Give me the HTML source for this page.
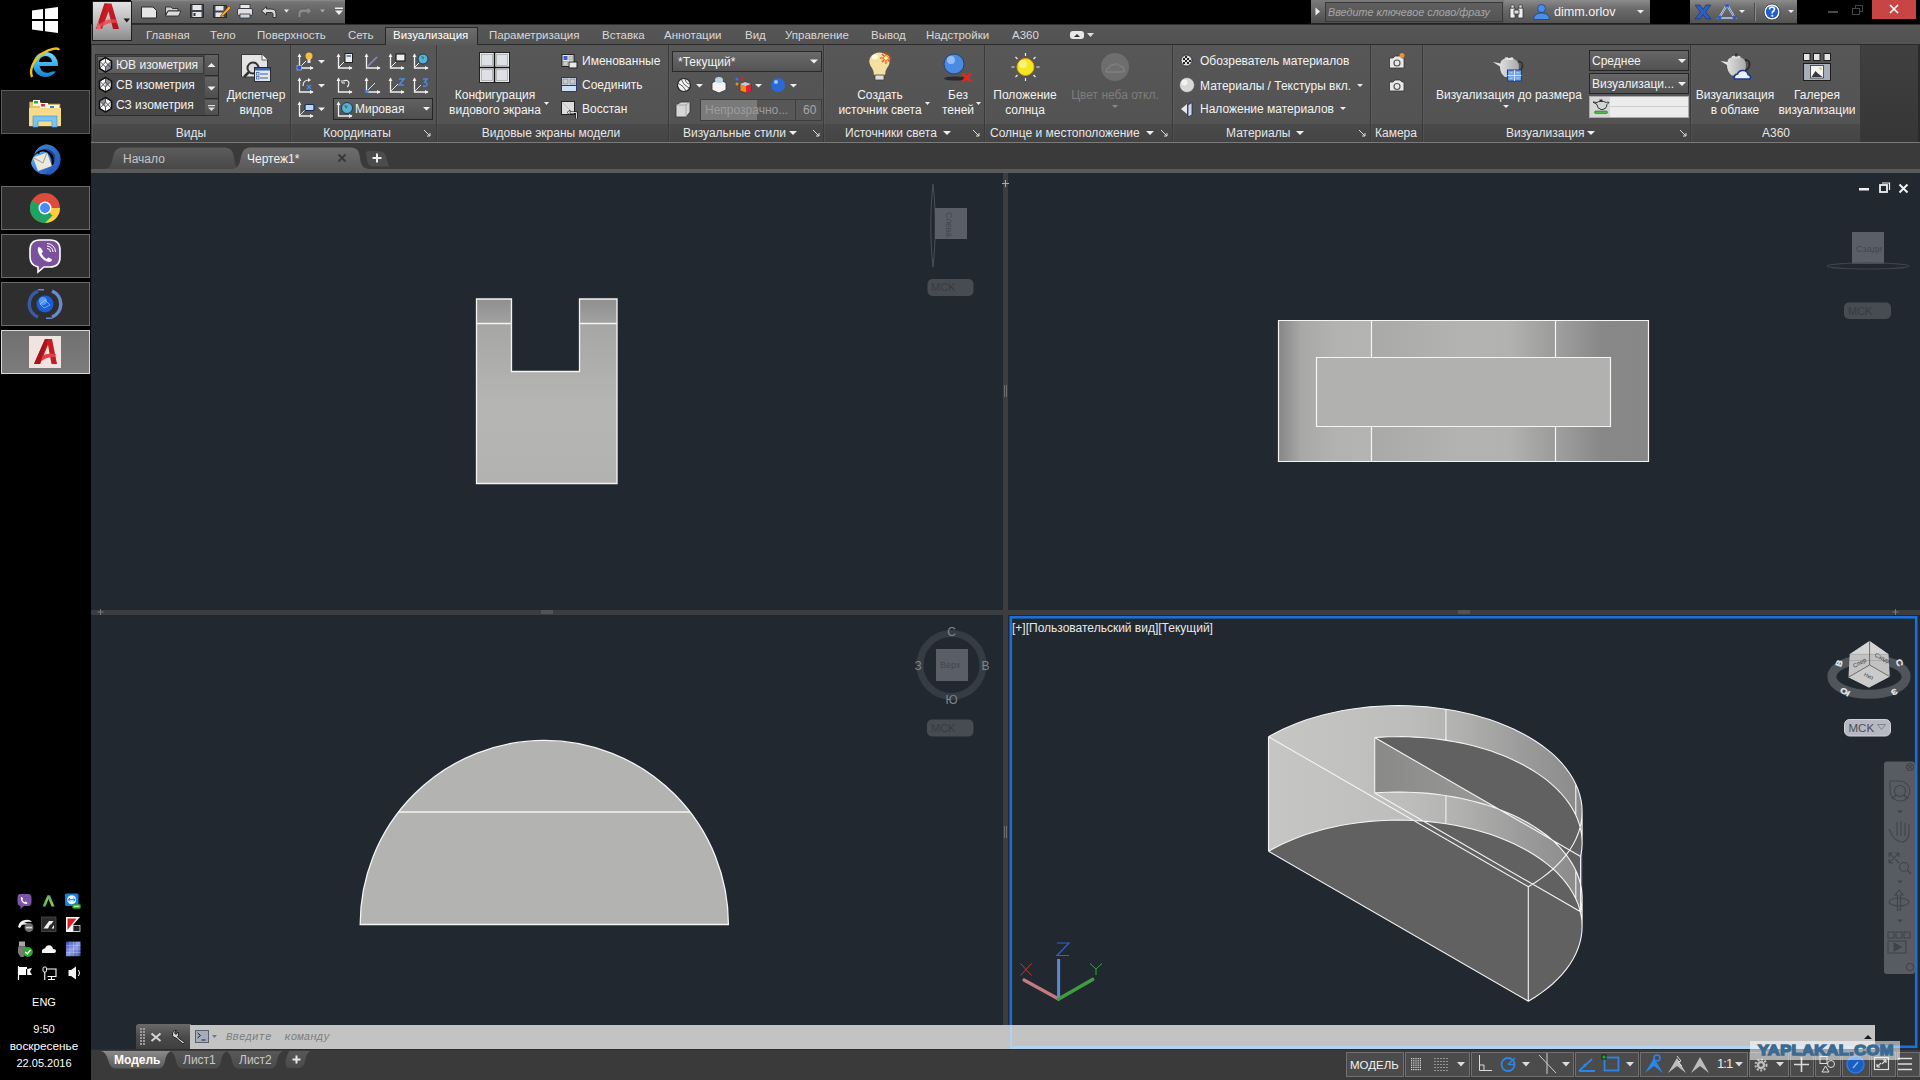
<!DOCTYPE html>
<html><head><meta charset="utf-8">
<style>
*{margin:0;padding:0;box-sizing:border-box}
html,body{width:1920px;height:1080px;overflow:hidden;background:#000;font-family:"Liberation Sans",sans-serif;color:#e8e8e8}
.a{position:absolute}
.t{position:absolute;white-space:nowrap;font-size:12px;line-height:14px}
svg{position:absolute;overflow:visible}
</style></head><body>

<!-- ============ LEFT TASKBAR ============ -->
<div class="a" style="left:0;top:0;width:91px;height:1080px;background:#000"></div>
<!-- windows logo -->
<svg style="left:0;top:0" width="91" height="40"><path d="M32,10.5 L43,9 V19 H32Z M45,8.7 L58,7 V19 H45Z M32,21 H43 V31 L32,29.5Z M45,21 H58 V33 L45,31.3Z" fill="#fff"/></svg>
<!-- IE -->
<svg style="left:0;top:40px" width="91" height="46">
<defs><linearGradient id="ieg" x1="0" y1="0" x2="0" y2="1"><stop offset="0" stop-color="#7ad8fa"/><stop offset="0.6" stop-color="#2eaaea"/><stop offset="1" stop-color="#1a80d0"/></linearGradient></defs>
<circle cx="45.5" cy="24.5" r="12.5" fill="url(#ieg)"/>
<path d="M39,22 A6.5,6 0 0 1 52,22Z" fill="#000"/>
<path d="M39.5,26 H59 V31.5 H52 Q46,34.5 41.5,30.5Z" fill="#000"/>
<path d="M32,37 C29,29 34,19 43,13 C50,9 58,7 59,10" fill="none" stroke="#eec020" stroke-width="2.4"/>
</svg>
<!-- explorer box -->
<div class="a" style="left:1px;top:90px;width:89px;height:44px;background:#2e2e2e;border:1px solid #5a5a5a"></div>
<svg style="left:0;top:90px" width="91" height="44">
<path d="M29.5,12 H40 L42,14 H60 V36 H29.5Z" fill="#e2c468" stroke="#b89a40" stroke-width="0.6"/>
<rect x="33" y="10" width="7" height="6" fill="#f4f4f4"/><rect x="34" y="11" width="4" height="2.5" fill="#3a3"/>
<rect x="40" y="13" width="8" height="5" fill="#f4f4f4"/><rect x="41" y="14" width="4" height="2.5" fill="#d33"/>
<rect x="48" y="15" width="11" height="4" fill="#f4f4f4"/><rect x="50" y="16" width="4" height="2.5" fill="#38d"/>
<path d="M29,18 H61 V36 H29Z" fill="#f6dc8a"/>
<path d="M33,26 H57 V37 H52 V31 H38 V37 H33Z" fill="#7cc4ee" stroke="#4a98d0" stroke-width="0.7"/>
</svg>
<!-- thunderbird -->
<svg style="left:0;top:140px" width="91" height="42">
<defs><linearGradient id="tbg" x1="0" y1="0" x2="1" y2="1"><stop offset="0" stop-color="#7ac8f4"/><stop offset="0.5" stop-color="#3a84dc"/><stop offset="1" stop-color="#1a3aa0"/></linearGradient></defs>
<path d="M45.7,4.6 A15,15 0 1 1 31,23 Q33,14 40,12 Q46,10 50,16 Q53,21 51,27 Q56,22 55,15 Q52,9 45,9 Q38,9 34,15 Q36,7 45.7,4.6Z" fill="url(#tbg)"/>
<path d="M45.7,4.6 A15,15 0 0 1 58,27 Q55,34 47,36 Q54,30 54,22 Q54,13 46,10 Q40,9 35,13 Q39,6 45.7,4.6Z" fill="#2a62c8" opacity="0.7"/>
<circle cx="38.5" cy="12.7" r="1.2" fill="#111"/>
<path d="M33,17.5 L47,12.5 L52,26 L38,31Z" fill="#ece8dc"/>
<path d="M33,17.5 L43,23 L47,12.5" fill="none" stroke="#8a8678" stroke-width="0.8"/>
</svg>
<!-- chrome box -->
<div class="a" style="left:1px;top:186px;width:89px;height:44px;background:#2e2e2e;border:1px solid #6a6a6a"></div>
<svg style="left:0;top:186px" width="91" height="44">
<circle cx="45" cy="22" r="15" fill="#dd4b3c"/>
<path d="M45,22 L58,29.5 A15,15 0 0 1 37.5,35Z" fill="#1da462"/>
<path d="M45,22 L37.5,35 A15,15 0 0 1 32,14.5 L45,22Z" fill="#1da462"/>
<path d="M45,22 L60,22 A15,15 0 0 1 45,37 L52.5,29.5Z" fill="#ffcd40"/>
<circle cx="45" cy="22" r="6.5" fill="#fff"/>
<circle cx="45" cy="22" r="5" fill="#4a8af4"/>
</svg>
<!-- viber box -->
<div class="a" style="left:1px;top:234px;width:89px;height:44px;background:#2e2e2e;border:1px solid #6a6a6a"></div>
<svg style="left:0;top:234px" width="91" height="44">
<path d="M40,6 H50 Q60,6 60,16 V23 Q60,33 50,33 H44 L38,38 V33 Q30,31 30,23 V16 Q30,6 40,6Z" fill="#7b519d" stroke="#fff" stroke-width="1.6"/>
<path d="M38.5,13 Q37,15 38.5,19 Q41,25 47,27.5 Q50,28.5 51.5,27 L52,25.5 L48.5,23.5 L46.5,25 Q43,23 41.5,19.5 L43,17.5 L41,14Z" fill="#fff"/>
<path d="M47,12 A6,6 0 0 1 53,18 M47,9.5 A8.5,8.5 0 0 1 55.5,18 M47,14.5 A3.5,3.5 0 0 1 50.5,18" fill="none" stroke="#fff" stroke-width="1"/>
</svg>
<!-- globe box -->
<div class="a" style="left:1px;top:282px;width:89px;height:44px;background:#2e2e2e;border:1px solid #6a6a6a"></div>
<svg style="left:0;top:282px" width="91" height="44">
<path d="M38,9 A14,14 0 0 0 38,35" fill="none" stroke="#3a5aa8" stroke-width="3.5"/>
<path d="M52,9 A14,14 0 0 1 52,35" fill="none" stroke="#6a8ad0" stroke-width="3.5"/>
<rect x="38" y="7" width="6" height="1.5" fill="#6a8ad0"/><rect x="46" y="35.5" width="6" height="1.5" fill="#6a8ad0"/>
<circle cx="45" cy="22" r="8.5" fill="#1a5ed8"/>
<circle cx="43" cy="19" r="4" fill="#6ab4f8" opacity="0.7"/>
<path d="M40,22 L45,18 L50,23 L44,26Z" fill="none" stroke="#cfe8ff" stroke-width="0.5"/>
</svg>
<!-- autocad box -->
<div class="a" style="left:1px;top:330px;width:89px;height:44px;background:linear-gradient(#707070,#7c7c7c);border:1px solid #d8d8d8"></div>
<div class="a" style="left:29px;top:336px;width:32px;height:32px;background:#f0e4e0"></div>
<svg style="left:0;top:330px" width="91" height="44">
<path d="M34,34 L45,9 H52 L57,34 H51.5 L48,15 L40,34Z" fill="#c41c24"/>
<path d="M36,30 Q44,22 56,24 L55,27 Q46,26 39,33Z" fill="#e04048"/>
<path d="M45,9 H48 L40,34 H34Z" fill="#a8141c"/>
</svg>
<!-- tray icons -->
<svg style="left:0;top:0" width="91" height="1000">
<defs><linearGradient id="adsk" x1="0" y1="1" x2="1" y2="0"><stop offset="0" stop-color="#2eb4a0"/><stop offset="0.5" stop-color="#8ac840"/><stop offset="1" stop-color="#2a8ad8"/></linearGradient>
<linearGradient id="gridg" x1="0" y1="0" x2="1" y2="1"><stop offset="0" stop-color="#3a4aa8"/><stop offset="0.5" stop-color="#8a9ae8"/><stop offset="1" stop-color="#3a4aa8"/></linearGradient></defs>
<path d="M20,894 H28 Q31.5,894 31.5,898 V902 Q31.5,906 28,906 H24 L20.5,909 V906 Q17.5,905.5 17.5,902 V898 Q17.5,894 20,894Z" fill="#7d55a8"/>
<path d="M21,897 Q20,899 22,902 Q24.5,904.5 27,904 L27.5,902.8 L25.5,901.5 L24.5,902.3 Q23,901.5 22.3,900 L23,899 L22,897Z" fill="#fff"/>
<path d="M42.5,906.5 L47.5,895.3 H50 L54.5,906.5 H51.5 L48.5,899 L45.5,906.5Z" fill="url(#adsk)"/>
<rect x="65" y="893.5" width="13.5" height="12.5" rx="1.5" fill="#1a7ee0"/>
<circle cx="71.7" cy="899.7" r="4.5" fill="#e8f4ff"/><path d="M68.5,899.7 H75 M70,898 L68.3,899.7 L70,901.4 M73.4,898 L75.1,899.7 L73.4,901.4" fill="none" stroke="#1a7ee0" stroke-width="1"/>
<rect x="72.5" y="904.2" width="8" height="4.3" rx="1.2" fill="#3ab83a" stroke="#1a8a1a" stroke-width="0.6"/><rect x="74" y="905.8" width="5" height="1.2" fill="#c8f8a8"/>
<path d="M18,927 Q19,921 25,920 Q30,919 32,922 Q27,921 24,923 Q21,925 20,928Z" fill="#f2f2f2"/><path d="M20,924.5 Q25,923 29,925" fill="none" stroke="#f2f2f2" stroke-width="1.5"/>
<circle cx="29" cy="927.5" r="4.5" fill="#6e6e6e"/><rect x="26" y="926.8" width="6" height="1.6" fill="#ddd"/>
<rect x="41.5" y="917" width="14.5" height="14.5" fill="#2a2a2a" stroke="#555" stroke-width="0.7"/>
<path d="M43.5,928.5 L49,921 H53.5 L51,924.5 H50 L48,928.5Z M51.5,928.5 L54,925 V928.5Z" fill="#f0f0f0"/>
<path d="M66,917 L80,917 L73,925 L80,932 L66,932Z" fill="#fff"/><path d="M67.5,918.5 H76.5 L72,924 L67.5,930Z" fill="#e01a20"/>
<rect x="73" y="925.5" width="7" height="6" fill="#222" stroke="#ddd" stroke-width="0.8"/>
<rect x="19" y="941.5" width="6" height="5" fill="#a8a8a8"/><path d="M18,946.5 H26 V953 L23.5,957 H20.5 L18,953Z" fill="#7a7a7a"/>
<circle cx="27.8" cy="952" r="5" fill="#2ea82e"/><path d="M25.3,952 L27.3,954 L30.5,949.8" fill="none" stroke="#fff" stroke-width="1.3"/>
<path d="M42,952.5 Q41.5,948.5 45,948.5 Q46.5,944.5 50.5,945.5 Q53,946.5 53,949 Q56,949 56,951 Q56,953 54,953 H43.5 Q42,953 42,952.5Z" fill="#f6f6f6"/>
<rect x="66" y="941.6" width="14.5" height="14.6" fill="url(#gridg)"/>
<path d="M66,945.5 H80.5 M66,949 H80.5 M66,952.5 H80.5 M70,941.6 V956.2 M73.5,941.6 V956.2 M77,941.6 V956.2" stroke="#c8d0f8" stroke-width="0.5" opacity="0.8"/>
<path d="M18.5,966 V980" stroke="#fff" stroke-width="1.2"/><path d="M19,967 H27 V969 L32,968 L30,971.5 L32,975 H19Z" fill="#fff"/><rect x="26" y="969" width="1.2" height="6" fill="#000"/>
<rect x="43" y="967" width="3.5" height="5" rx="1.2" fill="none" stroke="#fff" stroke-width="1"/><path d="M44.75,972 V980 M46.5,969 H56 V976.5 H47.5 M51.5,976.5 V979 M48,979.5 H55" fill="none" stroke="#fff" stroke-width="1.1"/>
<path d="M68.5,970 H71 L76,966.5 V979.5 L71,976 H68.5Z" fill="#f2f2f2"/><path d="M78.5,970 Q80.5,973 78.5,976" fill="none" stroke="#fff" stroke-width="1"/>
</svg>
<div class="t" style="left:0;top:995px;width:88px;text-align:center;color:#fff;font-size:11px">ENG</div>
<div class="t" style="left:0;top:1022px;width:88px;text-align:center;color:#fff;font-size:11px">9:50</div>
<div class="t" style="left:0;top:1039px;width:88px;text-align:center;color:#fff;font-size:11.8px">воскресенье</div>
<div class="t" style="left:0;top:1056px;width:88px;text-align:center;color:#fff;font-size:11px">22.05.2016</div>

<!-- ============ TITLE BAR ============ -->
<div class="a" style="left:91px;top:0;width:1829px;height:24px;background:#000"></div>
<!-- QAT -->
<div class="a" style="left:131px;top:0;width:214px;height:24px;background:linear-gradient(#8c8c8c 0,#747474 2px,#666 45%,#585858 100%);border-bottom:1px solid #2a2a2a"></div>
<svg style="left:0;top:0" width="360" height="24">
<path d="M141.5,7 H153 L156.5,10.5 V18 H141.5Z" fill="#e6e6e6" stroke="#2a2a2a" stroke-width="1"/>
<path d="M165.5,7 H171 L172.5,8.5 H178 V11 H168 L165.5,15Z" fill="#cfcfcf" stroke="#2a2a2a" stroke-width="0.9"/>
<path d="M165.5,16 L168,11 H181 L178.5,16Z" fill="#dcdcdc" stroke="#2a2a2a" stroke-width="0.9"/>
<rect x="190.5" y="4.5" width="13" height="13" fill="#3f4550" stroke="#2a2a2a"/>
<rect x="192.5" y="5" width="9" height="5" fill="#e6e6e6"/><rect x="192.5" y="12" width="9" height="5" fill="#e6e6e6"/><rect x="193.5" y="13" width="2" height="3" fill="#333"/>
<rect x="213.5" y="5.5" width="13" height="12" fill="#3f4550" stroke="#2a2a2a"/>
<rect x="215.5" y="6" width="8" height="4.5" fill="#e6e6e6"/><rect x="215.5" y="12.5" width="8" height="4.5" fill="#e6e6e6"/>
<path d="M221,15 L229,6 L231,8 L223,16 L220.5,16.5Z" fill="#f0b030" stroke="#7a3a10" stroke-width="0.7"/>
<rect x="240" y="4.5" width="10" height="4" fill="#e8e8e8" stroke="#333" stroke-width="0.8"/>
<rect x="237.5" y="8.5" width="15" height="7" rx="1.5" fill="#e0e0e0" stroke="#333" stroke-width="0.9"/>
<rect x="240" y="14" width="10" height="4" fill="#c9d6e6" stroke="#333" stroke-width="0.8"/>
<path d="M261.5,11 L266.5,6.5 V9 H271 Q276,9 276,14 V17.5 H273 V14 Q273,12.5 271,12.5 H266.5 V15Z" fill="#d8d8d8" stroke="#2a2a2a" stroke-width="0.9"/>
<path d="M284,9.5 H289 L286.5,12.5Z" fill="#eee"/>
<path d="M312,11 L307,6.5 V9 H302.5 Q298,9 298,14 V17.5 H301 V14 Q301,12.5 303,12.5 H307 V15Z" fill="#8a8a8a" stroke="#5a5a5a" stroke-width="0.8"/>
<path d="M320,9.5 H325 L322.5,12.5Z" fill="#aaa"/>
<rect x="335" y="7.5" width="8" height="1.5" fill="#eee"/><path d="M335,10.5 H343 L339,15Z" fill="#eee"/>
</svg>
<!-- search -->
<div class="a" style="left:1311px;top:0;width:193px;height:24px;background:linear-gradient(#7a7a7a,#4e4e4e);border-bottom:1px solid #222"></div>
<svg style="left:1311px;top:0" width="14" height="24"><path d="M4.5,7.5 L9,11.5 L4.5,15.5Z" fill="#eee"/></svg>
<div class="a" style="left:1325px;top:2px;width:178px;height:20px;background:linear-gradient(#5f5f5f,#545454);border:1px solid #3a3a3a"></div>
<div class="t" style="left:1328px;top:5px;font-size:10.8px;font-style:italic;color:#a6a6a6">Введите ключевое слово/фразу</div>
<!-- user toolbar -->
<div class="a" style="left:1504px;top:0;width:146px;height:24px;background:linear-gradient(#8a8a8a,#6a6a6a 40%,#545454);border-bottom:1px solid #222"></div>
<svg style="left:1504px;top:0" width="146" height="24">
<path d="M6,8 H11 V18 H6Z M14,8 H19 V18 H14Z" fill="#f0f0f0" stroke="#333" stroke-width="0.8"/>
<rect x="10" y="10" width="5" height="4" fill="#ddd" stroke="#333" stroke-width="0.8"/>
<rect x="7" y="5" width="3" height="3" fill="#ddd" stroke="#333" stroke-width="0.6"/><rect x="15" y="5" width="3" height="3" fill="#ddd" stroke="#333" stroke-width="0.6"/>
<circle cx="37.5" cy="8.5" r="4" fill="#4a8ee8" stroke="#1a3e90" stroke-width="0.8"/>
<path d="M29.5,19.5 Q30,13 37.5,13 Q45,13 45.5,19.5Z" fill="#4a8ee8" stroke="#1a3e90" stroke-width="0.8"/>
<path d="M133,10 H140 L136.5,13.5Z" fill="#eee"/>
</svg>
<div class="t" style="left:1554px;top:5px;font-size:12.6px;color:#f2f2f2">dimm.orlov</div>
<div class="a" style="left:1690px;top:0;width:107px;height:24px;background:linear-gradient(#8a8a8a,#6a6a6a 40%,#545454);border-bottom:1px solid #222"></div>
<svg style="left:1690px;top:0" width="107" height="24">
<path d="M5,5 H10 L13,9.5 L16,5 H21 L15.5,12 L21,19 H16 L13,14.5 L10,19 H5 L10.5,12Z" fill="#2a5fc8" stroke="#10306a" stroke-width="0.6"/>
<path d="M37,5 L45,18 H29Z" fill="none" stroke="#e6e6e6" stroke-width="2"/>
<path d="M37,5 L45,18 H29Z" fill="none" stroke="#2a5fc8" stroke-width="0.8"/>
<circle cx="37" cy="5.5" r="2" fill="#2a5fc8"/><circle cx="29.5" cy="17.5" r="2" fill="#2a5fc8"/><circle cx="44.5" cy="17.5" r="2" fill="#2a5fc8"/>
<path d="M49,10 H55 L52,13Z" fill="#eee"/>
<rect x="64" y="3" width="1" height="18" fill="#4a4a4a"/><rect x="65" y="3" width="1" height="18" fill="#8a8a8a"/>
<circle cx="82" cy="12" r="8" fill="#fff" stroke="#333" stroke-width="0.8"/><circle cx="82" cy="12" r="6.2" fill="#1f5fd0"/>
<path d="M79.5,9.5 Q79.5,7 82,7 Q84.5,7 84.5,9.3 Q84.5,11 82.3,12 V13.5" fill="none" stroke="#fff" stroke-width="1.6"/><circle cx="82.3" cy="15.7" r="1" fill="#fff"/>
<path d="M98,10 H104 L101,13Z" fill="#eee"/>
</svg>
<!-- window controls -->
<div class="a" style="left:1828px;top:11px;width:10px;height:2px;background:#4a4a4a"></div>
<div class="a" style="left:1855px;top:5px;width:8px;height:7px;border:1px solid #444"></div>
<div class="a" style="left:1852px;top:8px;width:8px;height:7px;border:1px solid #444;background:#000"></div>
<div class="a" style="left:1872px;top:0;width:44px;height:19px;background:#c74545"></div>
<svg style="left:1872px;top:0" width="44" height="19"><path d="M18,5 L26,13 M26,5 L18,13" stroke="#fff" stroke-width="1.6"/></svg>


<!-- ============ RIBBON TABS ============ -->
<div class="a" style="left:91px;top:24px;width:1829px;height:21px;background:linear-gradient(#565656,#525252);border-top:1px solid #2e2e2e;border-bottom:1px solid #2c2c2c"></div>
<div class="a" style="left:385px;top:27px;width:93px;height:18px;background:linear-gradient(#6c6c6c,#5a5a5a);border:1px solid #262626;border-bottom:none"></div>
<div class="t" style="left:146px;top:28px;font-size:11.5px;color:#d8d8d8">Главная</div>
<div class="t" style="left:210px;top:28px;font-size:11.5px;color:#d8d8d8">Тело</div>
<div class="t" style="left:257px;top:28px;font-size:11.5px;color:#d8d8d8">Поверхность</div>
<div class="t" style="left:348px;top:28px;font-size:11.5px;color:#d8d8d8">Сеть</div>
<div class="t" style="left:393px;top:28px;font-size:11.5px;color:#ffffff">Визуализация</div>
<div class="t" style="left:489px;top:28px;font-size:11.5px;color:#d8d8d8">Параметризация</div>
<div class="t" style="left:602px;top:28px;font-size:11.5px;color:#d8d8d8">Вставка</div>
<div class="t" style="left:664px;top:28px;font-size:11.5px;color:#d8d8d8">Аннотации</div>
<div class="t" style="left:745px;top:28px;font-size:11.5px;color:#d8d8d8">Вид</div>
<div class="t" style="left:785px;top:28px;font-size:11.5px;color:#d8d8d8">Управление</div>
<div class="t" style="left:871px;top:28px;font-size:11.5px;color:#d8d8d8">Вывод</div>
<div class="t" style="left:926px;top:28px;font-size:11.5px;color:#d8d8d8">Надстройки</div>
<div class="t" style="left:1012px;top:28px;font-size:11.5px;color:#d8d8d8">A360</div>
<div class="a" style="left:1070px;top:31px;width:14px;height:8px;background:#e8e8e8;border-radius:3px"></div>
<svg style="left:0;top:0" width="1100" height="45"><path d="M1074,37 L1077,34 L1080,37Z" fill="#333"/><path d="M1087,33 H1094 L1090.5,37Z" fill="#ddd"/></svg>


<!-- ============ RIBBON PANELS ============ -->
<div class="a" style="left:91px;top:45px;width:1829px;height:98px;background:#393939"></div>
<div class="a" style="left:92px;top:45px;width:198px;height:79px;background:linear-gradient(#575757,#535353);border-left:1px solid #5c5c5c"></div>
<div class="a" style="left:92px;top:124px;width:198px;height:18px;background:linear-gradient(#4a4a4a,#444);border-left:1px solid #505050"></div>
<div class="a" style="left:290px;top:45px;width:1px;height:97px;background:#3a3a3a"></div>
<div class="a" style="left:291px;top:45px;width:145px;height:79px;background:linear-gradient(#575757,#535353);border-left:1px solid #5c5c5c"></div>
<div class="a" style="left:291px;top:124px;width:145px;height:18px;background:linear-gradient(#4a4a4a,#444);border-left:1px solid #505050"></div>
<div class="a" style="left:436px;top:45px;width:1px;height:97px;background:#3a3a3a"></div>
<div class="a" style="left:437px;top:45px;width:231px;height:79px;background:linear-gradient(#575757,#535353);border-left:1px solid #5c5c5c"></div>
<div class="a" style="left:437px;top:124px;width:231px;height:18px;background:linear-gradient(#4a4a4a,#444);border-left:1px solid #505050"></div>
<div class="a" style="left:668px;top:45px;width:1px;height:97px;background:#3a3a3a"></div>
<div class="a" style="left:669px;top:45px;width:154px;height:79px;background:linear-gradient(#575757,#535353);border-left:1px solid #5c5c5c"></div>
<div class="a" style="left:669px;top:124px;width:154px;height:18px;background:linear-gradient(#4a4a4a,#444);border-left:1px solid #505050"></div>
<div class="a" style="left:823px;top:45px;width:1px;height:97px;background:#3a3a3a"></div>
<div class="a" style="left:824px;top:45px;width:160px;height:79px;background:linear-gradient(#575757,#535353);border-left:1px solid #5c5c5c"></div>
<div class="a" style="left:824px;top:124px;width:160px;height:18px;background:linear-gradient(#4a4a4a,#444);border-left:1px solid #505050"></div>
<div class="a" style="left:984px;top:45px;width:1px;height:97px;background:#3a3a3a"></div>
<div class="a" style="left:985px;top:45px;width:187px;height:79px;background:linear-gradient(#575757,#535353);border-left:1px solid #5c5c5c"></div>
<div class="a" style="left:985px;top:124px;width:187px;height:18px;background:linear-gradient(#4a4a4a,#444);border-left:1px solid #505050"></div>
<div class="a" style="left:1172px;top:45px;width:1px;height:97px;background:#3a3a3a"></div>
<div class="a" style="left:1173px;top:45px;width:197px;height:79px;background:linear-gradient(#575757,#535353);border-left:1px solid #5c5c5c"></div>
<div class="a" style="left:1173px;top:124px;width:197px;height:18px;background:linear-gradient(#4a4a4a,#444);border-left:1px solid #505050"></div>
<div class="a" style="left:1370px;top:45px;width:1px;height:97px;background:#3a3a3a"></div>
<div class="a" style="left:1371px;top:45px;width:51px;height:79px;background:linear-gradient(#575757,#535353);border-left:1px solid #5c5c5c"></div>
<div class="a" style="left:1371px;top:124px;width:51px;height:18px;background:linear-gradient(#4a4a4a,#444);border-left:1px solid #505050"></div>
<div class="a" style="left:1422px;top:45px;width:1px;height:97px;background:#3a3a3a"></div>
<div class="a" style="left:1423px;top:45px;width:267px;height:79px;background:linear-gradient(#575757,#535353);border-left:1px solid #5c5c5c"></div>
<div class="a" style="left:1423px;top:124px;width:267px;height:18px;background:linear-gradient(#4a4a4a,#444);border-left:1px solid #505050"></div>
<div class="a" style="left:1690px;top:45px;width:1px;height:97px;background:#3a3a3a"></div>
<div class="a" style="left:1691px;top:45px;width:169px;height:79px;background:linear-gradient(#575757,#535353);border-left:1px solid #5c5c5c"></div>
<div class="a" style="left:1691px;top:124px;width:169px;height:18px;background:linear-gradient(#4a4a4a,#444);border-left:1px solid #505050"></div>
<div class="a" style="left:1860px;top:45px;width:1px;height:97px;background:#3a3a3a"></div>
<div class="a" style="left:91px;top:45px;width:1px;height:97px;background:#3a3a3a"></div>
<div class="a" style="left:1861px;top:45px;width:57px;height:97px;background:linear-gradient(#404040,#363636)"></div>
<div class="a" style="left:1918px;top:45px;width:2px;height:98px;background:#2a2a2a"></div>
<div class="a" style="left:91px;top:142px;width:1829px;height:1px;background:#7a7a7a"></div>
<div class="t" style="left:91px;top:126px;width:200px;text-align:center;color:#e6e6e6">Виды</div>
<div class="t" style="left:257px;top:126px;width:200px;text-align:center;color:#e6e6e6">Координаты</div>
<div class="t" style="left:451px;top:126px;width:200px;text-align:center;color:#e6e6e6">Видовые экраны модели</div>
<div class="t" style="left:1296px;top:126px;width:200px;text-align:center;color:#e6e6e6">Камера</div>
<div class="t" style="left:1676px;top:126px;width:200px;text-align:center;color:#e6e6e6">A360</div>
<div class="t" style="left:683px;top:126px;color:#e6e6e6">Визуальные стили</div>
<div class="t" style="left:845px;top:126px;color:#e6e6e6">Источники света</div>
<div class="t" style="left:990px;top:126px;color:#e6e6e6">Солнце и местоположение</div>
<div class="t" style="left:1226px;top:126px;color:#e6e6e6">Материалы</div>
<div class="t" style="left:1506px;top:126px;color:#e6e6e6">Визуализация</div>

<!-- ===== Виды ===== -->
<div class="a" style="left:95px;top:54px;width:124px;height:62px;background:#474747;border:1px solid #2c2c2c"></div>
<div class="a" style="left:97px;top:56px;width:107px;height:18px;background:linear-gradient(#707070,#5c5c5c);border:1px solid #3a3a3a"></div>
<div class="a" style="left:205px;top:55px;width:13px;height:21px;background:linear-gradient(#626262,#4e4e4e);border-bottom:1px solid #2c2c2c"></div>
<div class="a" style="left:205px;top:77px;width:13px;height:22px;background:linear-gradient(#626262,#4e4e4e);border-bottom:1px solid #2c2c2c"></div>
<div class="a" style="left:205px;top:100px;width:13px;height:15px;background:linear-gradient(#626262,#4e4e4e)"></div>
<svg style="left:0;top:0" width="300" height="140">
<path d="M207.5,67 L211.5,63 L215.5,67Z" fill="#eee"/>
<path d="M207.5,86.5 L211.5,90.5 L215.5,86.5Z" fill="#eee"/>
<rect x="208" y="105" width="7" height="1.2" fill="#ddd"/><path d="M208,107.5 H215 L211.5,111Z" fill="#ddd"/>
<polygon points="105.5,57.5 111.5,61.0 111.5,68.5 105.5,72.0 99.5,68.5 99.5,61.0" fill="#f4f4f4" stroke="#111" stroke-width="1.3"/><polygon points="105.5,67.0 111.5,61.0 111.5,68.5 105.5,72.0" fill="#8a9099"/><path d="M105.5,57.5 L105.5,62.0 L99.5,68.5 M105.5,62.0 L111.5,68.5 M105.5,72.0 L105.5,67.0 L99.5,61.0 M105.5,67.0 L111.5,61.0" fill="none" stroke="#333" stroke-width="0.8"/><polygon points="105.5,57.5 111.5,61.0 111.5,68.5 105.5,72.0 99.5,68.5 99.5,61.0" fill="none" stroke="#111" stroke-width="1.3"/>
<polygon points="105.5,77.5 111.5,81.0 111.5,88.5 105.5,92.0 99.5,88.5 99.5,81.0" fill="#f4f4f4" stroke="#111" stroke-width="1.3"/><polygon points="105.5,77.5 111.5,81.0 105.5,87.0 105.5,82.0" fill="#8a9099"/><path d="M105.5,77.5 L105.5,82.0 L99.5,88.5 M105.5,82.0 L111.5,88.5 M105.5,92.0 L105.5,87.0 L99.5,81.0 M105.5,87.0 L111.5,81.0" fill="none" stroke="#333" stroke-width="0.8"/><polygon points="105.5,77.5 111.5,81.0 111.5,88.5 105.5,92.0 99.5,88.5 99.5,81.0" fill="none" stroke="#111" stroke-width="1.3"/>
<polygon points="105.5,97.5 111.5,101.0 111.5,108.5 105.5,112.0 99.5,108.5 99.5,101.0" fill="#f4f4f4" stroke="#111" stroke-width="1.3"/><polygon points="105.5,97.5 105.5,102.0 105.5,107.0 99.5,101.0" fill="#8a9099"/><path d="M105.5,97.5 L105.5,102.0 L99.5,108.5 M105.5,102.0 L111.5,108.5 M105.5,112.0 L105.5,107.0 L99.5,101.0 M105.5,107.0 L111.5,101.0" fill="none" stroke="#333" stroke-width="0.8"/><polygon points="105.5,97.5 111.5,101.0 111.5,108.5 105.5,112.0 99.5,108.5 99.5,101.0" fill="none" stroke="#111" stroke-width="1.3"/>
<!-- dispatcher icon -->
<path d="M241.5,54.5 H262 L267.5,60 V77 H241.5Z" fill="#e4e4e4" stroke="#3a3a3a" stroke-width="1"/>
<path d="M262,54.5 V60 H267.5" fill="#fff" stroke="#3a3a3a" stroke-width="0.8"/>
<circle cx="253" cy="68" r="5.5" fill="#ddd" stroke="#333" stroke-width="2"/>
<path d="M249,72 L244,77" stroke="#333" stroke-width="2.5"/>
<rect x="254.5" y="67.5" width="16" height="14" fill="#dfe6ee" stroke="#2a2a2a" stroke-width="1"/>
<rect x="255" y="68" width="15" height="2.5" fill="#3a62a8"/>
<rect x="256.5" y="72.5" width="2.5" height="2.5" fill="none" stroke="#3a62a8" stroke-width="0.7"/><rect x="260" y="73.5" width="8" height="1" fill="#3a62a8"/>
<rect x="256.5" y="76.5" width="2.5" height="2.5" fill="none" stroke="#3a62a8" stroke-width="0.7"/><rect x="260" y="77.5" width="8" height="1" fill="#3a62a8"/>
</svg>
<div class="t" style="left:116px;top:58px;color:#f2f2f2">ЮВ изометрия</div>
<div class="t" style="left:116px;top:78px;color:#f2f2f2">СВ изометрия</div>
<div class="t" style="left:116px;top:98px;color:#f2f2f2">СЗ изометрия</div>
<div class="t" style="left:206px;top:88px;width:100px;text-align:center;color:#f2f2f2">Диспетчер</div>
<div class="t" style="left:206px;top:103px;width:100px;text-align:center;color:#f2f2f2">видов</div>

<!-- ===== Координаты ===== -->
<svg style="left:0;top:0" width="440" height="140">
<defs>
<g id="ucs"><path d="M1.5,1.5 V15 H15" fill="none" stroke="#f0f0f0" stroke-width="1.3"/><path d="M-0.5,4 L1.5,0.5 L3.5,4Z M12,13 L15.5,15 L12,17Z" fill="#f0f0f0"/></g>
<g id="dd"><path d="M0,0 H7 L3.5,3.5Z" fill="#eee"/></g>
</defs>
<use href="#ucs" x="298" y="53"/><path d="M300,67 L306,61" stroke="#f0f0f0" stroke-width="1"/><circle cx="309" cy="56" r="3.5" fill="#f5c040"/><rect x="307.5" y="59" width="3" height="4" fill="#ddd"/><rect x="297" y="65.5" width="4.5" height="4.5" fill="#2a55b8" stroke="#8ab0f0" stroke-width="0.8"/><use href="#dd" x="318" y="60"/>
<use href="#ucs" x="337" y="53"/><path d="M339,67 L344,62" stroke="#f0f0f0"/><rect x="345" y="53.5" width="7.5" height="9" fill="#eee" stroke="#222" stroke-width="1"/><rect x="346.5" y="55" width="4.5" height="2" fill="#7a8ab8"/>
<use href="#ucs" x="365" y="53"/><path d="M367,67 L377,57" stroke="#8a8ad8" stroke-width="1.5"/>
<use href="#ucs" x="389" y="53"/><path d="M391,67 L396,62" stroke="#f0f0f0"/><rect x="396" y="54" width="9" height="7" fill="#eee" stroke="#222" stroke-width="1.2"/>
<use href="#ucs" x="413" y="53"/><path d="M415,67 L419,63" stroke="#f0f0f0"/><circle cx="423" cy="59" r="5" fill="#5ab0d8" stroke="#1a3a5a" stroke-width="1"/><path d="M421,56 L424,57 L423,60Z" fill="#2a8a4a"/>
<use href="#ucs" x="298" y="77"/><path d="M303,86 Q303,80 309,80" fill="none" stroke="#f0f0f0" stroke-width="1.2"/><path d="M308,78 L311,80 L308,82Z" fill="#f0f0f0"/><path d="M307,85 L311,89 M311,85 L307,89" stroke="#4a8ae8" stroke-width="1.3"/><use href="#dd" x="318" y="84"/>
<use href="#ucs" x="337" y="77"/><path d="M343,81 Q348,79 349,83 Q349,86 347,87" fill="none" stroke="#f0f0f0" stroke-width="1.1"/><path d="M342,80 V83 H345" fill="none" stroke="#f0f0f0"/>
<use href="#ucs" x="365" y="77"/><path d="M367,91 L375,83" stroke="#f0f0f0" stroke-width="0.9"/><rect x="365.5" y="90" width="3" height="3" fill="#4a8ae8"/>
<use href="#ucs" x="389" y="77"/><path d="M391,91 L398,84" stroke="#f0f0f0" stroke-width="0.9"/><path d="M399,79 H404 L399,85 H404" fill="none" stroke="#4a8ae8" stroke-width="1.5"/>
<use href="#ucs" x="413" y="77"/><path d="M415,91 L421,85" stroke="#f0f0f0" stroke-width="0.9"/><path d="M423,79 H427 L424.5,82 Q427.5,82.5 427,85 Q426,87 423,86" fill="none" stroke="#4a8ae8" stroke-width="1.4"/>
<use href="#ucs" x="298" y="101"/><path d="M300,115 L305,110" stroke="#f0f0f0" stroke-width="0.9"/><rect x="305" y="104.5" width="9" height="6" rx="1" fill="#bcd6f0" stroke="#1a2a5a" stroke-width="1.2"/><use href="#dd" x="318" y="107.5"/>
</svg>
<div class="a" style="left:333px;top:98px;width:100px;height:22px;background:linear-gradient(#626262,#4e4e4e);border:1px solid #262626"></div>
<svg style="left:0;top:0" width="440" height="140">
<use href="#ucs" x="337" y="101"/><circle cx="347" cy="108" r="5.5" fill="#5ab0d8" stroke="#1a3a5a" stroke-width="1"/><path d="M344,105 L348,106 L346,109Z" fill="#2a8a4a"/>
<path d="M423,107 H430 L426.5,110.5Z" fill="#f0f0f0"/>
</svg>
<div class="t" style="left:355px;top:102px;color:#f2f2f2">Мировая</div>

<!-- ===== Видовые экраны ===== -->
<svg style="left:0;top:0" width="680" height="140">
<rect x="479.5" y="52.5" width="30" height="30" fill="#e8e8e8" stroke="#222" stroke-width="1"/>
<path d="M494.5,52.5 V82.5 M479.5,67.5 H509.5" stroke="#111" stroke-width="1.5"/>
<rect x="481.5" y="54.5" width="11" height="11" fill="#dde0e6" stroke="#aaa" stroke-width="0.8"/><rect x="496.5" y="54.5" width="11" height="11" fill="#dde0e6" stroke="#aaa" stroke-width="0.8"/>
<rect x="481.5" y="69.5" width="11" height="11" fill="#dde0e6" stroke="#aaa" stroke-width="0.8"/><rect x="496.5" y="69.5" width="11" height="11" fill="#dde0e6" stroke="#aaa" stroke-width="0.8"/>
<path d="M544,102 H549 L546.5,105Z" fill="#eee"/>
<rect x="562" y="54.5" width="12" height="12" fill="#e8e8e8" stroke="#222"/><rect x="563.5" y="56" width="4" height="4" fill="#3a62c8"/><rect x="569" y="56" width="4" height="4" fill="#ccc" stroke="#888" stroke-width="0.5"/><rect x="563.5" y="61.5" width="4" height="4" fill="#ccc" stroke="#888" stroke-width="0.5"/>
<rect x="569" y="62" width="8" height="6" fill="#e8e8e8" stroke="#222"/>
<rect x="561.5" y="77.5" width="15" height="14" fill="#cfe0f4" stroke="#2a3a6a"/><rect x="563" y="79" width="5" height="5" fill="#ccc" stroke="#777" stroke-width="0.6"/><rect x="570" y="79" width="5" height="5" fill="#ccc" stroke="#777" stroke-width="0.6"/><path d="M561.5,85.5 H576.5" stroke="#2a3a6a"/>
<rect x="561.5" y="101.5" width="13" height="13" fill="#dcdcdc" stroke="#222"/><path d="M563,103 L573,113" stroke="#bbb" stroke-width="1"/><path d="M576.5,118.5 V112.5 H569" fill="none" stroke="#111" stroke-width="2.2"/><path d="M576.5,118.5 V112.5 H569" fill="none" stroke="#eee" stroke-width="0.9"/><path d="M570,110 L567,112.5 L570,115Z" fill="#eee" stroke="#111" stroke-width="0.6"/>
</svg>
<div class="t" style="left:445px;top:88px;width:100px;text-align:center;color:#f2f2f2">Конфигурация</div>
<div class="t" style="left:445px;top:103px;width:100px;text-align:center;color:#f2f2f2">видового экрана</div>
<div class="t" style="left:582px;top:54px;color:#f2f2f2">Именованные</div>
<div class="t" style="left:582px;top:78px;color:#f2f2f2">Соединить</div>
<div class="t" style="left:582px;top:102px;color:#f2f2f2">Восстан</div>

<!-- ===== Визуальные стили ===== -->
<div class="a" style="left:672px;top:51px;width:150px;height:21px;background:linear-gradient(#6a6a6a,#545454);border:1px solid #2a2a2a"></div>
<div class="t" style="left:678px;top:55px;color:#f2f2f2">*Текущий*</div>
<div class="a" style="left:700px;top:99px;width:122px;height:22px;background:#575757;border:1px solid #3e3e3e"></div>
<div class="a" style="left:701px;top:100px;width:56px;height:20px;background:#7a7a7a"></div>
<div class="a" style="left:795px;top:100px;width:1px;height:20px;background:#3e3e3e"></div>
<div class="t" style="left:705px;top:103px;color:#9c9c9c">Непрозрачно...</div>
<div class="t" style="left:803px;top:103px;color:#a8a8a8">60</div>
<svg style="left:0;top:0" width="830" height="140">
<path d="M810,59.5 H818 L814,63.5Z" fill="#f0f0f0"/>
<circle cx="684" cy="85" r="6.5" fill="#f2f2f2" stroke="#222" stroke-width="1.2"/><path d="M678,83 Q684,86 686,91 M681,79 Q683,85 689,88 M685,79 Q686,84 690,84" fill="none" stroke="#333" stroke-width="0.8"/>
<use href="#dd" x="696" y="84"/>
<path d="M712,83 L719,79 L726,83 V90 L719,93 L712,90Z" fill="#f4f4f4" stroke="#333" stroke-width="0.8"/><ellipse cx="719" cy="80" rx="4" ry="3" fill="#bcd6e8"/>
<circle cx="737" cy="79" r="1.5" fill="#4a6ae8"/><circle cx="742" cy="79" r="1.5" fill="#d22"/><circle cx="737" cy="84" r="1.5" fill="#f08a20"/>
<path d="M740,84 L745,82 L751,84 V91 L746,93 L740,91Z" fill="#f08a20" stroke="#333" stroke-width="0.7"/><path d="M740,84 L745,82 L751,84 L746,86Z" fill="#bcd" /><path d="M746,86 L751,84 V91 L746,93Z" fill="#d23"/>
<use href="#dd" x="755" y="84"/>
<circle cx="778" cy="85" r="7" fill="#2a6ad8"/><circle cx="776" cy="82" r="2" fill="#9cc4f8"/>
<use href="#dd" x="790" y="84"/>
<path d="M676,105 L681,102 H690 V112 L686,117 H676Z" fill="#d6d6d6" stroke="#333" stroke-width="0.8"/><path d="M686,105 H676 M686,105 L690,102 M686,105 V117" stroke="#999" stroke-width="0.8" fill="none"/>
</svg>

<!-- ===== Источники света ===== -->
<svg style="left:0;top:0" width="1000" height="140">
<path d="M874,75 Q874,71 872,68 Q868,63 870,58 Q873,52.5 880,52.5 Q886,53 889,58 Q891,63 887,68 Q885,71 885,75Z" fill="#f4e0a0"/>
<ellipse cx="875" cy="57" rx="3" ry="2.5" fill="#fffbe8"/>
<rect x="875" y="75" width="9" height="5" fill="#ddd" stroke="#444" stroke-width="0.8"/>
<circle cx="886" cy="58" r="3.5" fill="#ffe060"/><path d="M886,52 V64 M880,58 H892 M882,54 L890,62 M890,54 L882,62" stroke="#e8401a" stroke-width="1.1"/>
<circle cx="886" cy="58" r="2" fill="#fff6a0"/>
<path d="M925,102 H930 L927.5,105Z" fill="#eee"/>
<circle cx="954" cy="64" r="10" fill="#4a8ae0" stroke="#1a3a7a" stroke-width="0.8"/><circle cx="951" cy="60" r="4" fill="#a8c8f4" opacity="0.8"/>
<ellipse cx="955" cy="78.5" rx="11" ry="2" fill="#2a2a2a"/>
<path d="M962.5,73.5 L971,81.5 M971,73.5 L962.5,81.5" stroke="#e2281a" stroke-width="2.6"/>
<path d="M976,102 H981 L978.5,105Z" fill="#eee"/>
</svg>
<div class="t" style="left:830px;top:88px;width:100px;text-align:center;color:#f2f2f2">Создать</div>
<div class="t" style="left:830px;top:103px;width:100px;text-align:center;color:#f2f2f2">источник света</div>
<div class="t" style="left:928px;top:88px;width:60px;text-align:center;color:#f2f2f2">Без</div>
<div class="t" style="left:928px;top:103px;width:60px;text-align:center;color:#f2f2f2">теней</div>

<!-- ===== Солнце ===== -->
<svg style="left:0;top:0" width="1180" height="140">
<circle cx="1025.5" cy="67" r="8.5" fill="#f6e820" stroke="#e8a000" stroke-width="1"/><circle cx="1023" cy="64" r="4" fill="#fcf6a0" opacity="0.7"/>
<path d="M1025.5,53 V56 M1025.5,78 V81 M1011.5,67 H1014.5 M1036.5,67 H1039.5 M1015.5,57 L1017.5,59 M1033.5,75 L1035.5,77 M1035.5,57 L1033.5,59 M1017.5,75 L1015.5,77" stroke="#f0f0f0" stroke-width="1.2"/>
<circle cx="1115" cy="67" r="14" fill="#6e6e6e"/>
<path d="M1106,72 Q1106,68 1109,68 Q1110,64 1114,65 Q1117,62 1120,66 Q1124,66 1124,70 Q1125,72 1123,72Z" fill="none" stroke="#888" stroke-width="1"/>
<path d="M1112,105 H1118 L1115,108Z" fill="#8a8a8a"/>
</svg>
<div class="t" style="left:975px;top:88px;width:100px;text-align:center;color:#f2f2f2">Положение</div>
<div class="t" style="left:975px;top:103px;width:100px;text-align:center;color:#f2f2f2">солнца</div>
<div class="t" style="left:1065px;top:88px;width:100px;text-align:center;color:#7e7e7e">Цвет неба откл.</div>

<!-- ===== Материалы ===== -->
<svg style="left:0;top:0" width="1440" height="140">
<circle cx="1186.5" cy="60.5" r="5.5" fill="#ddd" stroke="#222" stroke-width="0.8"/>
<path d="M1183,58 h2 v2 h-2z M1187,58 h2 v2 h-2z M1185,60 h2 v2 h-2z M1189,60 h2 v2 h-2z M1183,62 h2 v2 h-2z M1187,62 h2 v2 h-2z M1185,56 h2 v2 h-2z" fill="#222"/>
<circle cx="1187" cy="85" r="7.5" fill="#d8d8d8" stroke="#555" stroke-width="0.8"/><circle cx="1184.5" cy="82.5" r="3" fill="#f2f2f2"/>
<path d="M1181,109 L1187,104 V114Z" fill="#e8e8e8"/><path d="M1188,105 L1192,102.5 V115 L1188,117Z" fill="#cfd8e8" stroke="#1a2a5a" stroke-width="0.8"/>
<path d="M1357,84 H1363 L1360,87Z" fill="#eee"/>
<path d="M1340,107 H1346 L1343,110Z" fill="#eee"/>
<!-- camera -->
<path d="M1389.5,58 H1393 L1395,56 H1400 L1402,58 H1404 V68 H1389.5Z" fill="#e8e8e8" stroke="#333" stroke-width="0.8"/><circle cx="1397" cy="63" r="3" fill="none" stroke="#555" stroke-width="1.2"/><circle cx="1402" cy="55.5" r="2.5" fill="#f09030"/>
<path d="M1389.5,82 H1393 L1395,80 H1400 L1402,82 H1404 V91 H1389.5Z" fill="#e8e8e8" stroke="#333" stroke-width="0.8"/><circle cx="1397" cy="86.5" r="3" fill="none" stroke="#555" stroke-width="1.2"/>
</svg>
<div class="t" style="left:1200px;top:54px;color:#f2f2f2">Обозреватель материалов</div>
<div class="t" style="left:1200px;top:79px;color:#f2f2f2">Материалы / Текстуры вкл.</div>
<div class="t" style="left:1200px;top:102px;color:#f2f2f2">Наложение материалов</div>

<!-- ===== Визуализация ===== -->
<svg style="left:0;top:0" width="1700" height="140">
<g transform="translate(0,3.5)"><path d="M1493,58.5 L1500,63 Q1500,70 1505,73.5 H1513 Q1519,70 1519,63 Q1519,57.5 1514,55.5 H1504 Q1500.5,56.5 1500.5,60Z" fill="url(#tpg)"/>
<path d="M1518,58 Q1523,58 1522.5,63 Q1522,66 1519,68" fill="none" stroke="#333" stroke-width="1.8"/>
<ellipse cx="1509" cy="55" rx="4.5" ry="1.5" fill="#e4e4e4"/><rect x="1508" y="51.5" width="2.5" height="3" fill="#555"/>
<rect x="1507.5" y="66.5" width="14" height="11" fill="#6aa4ec" stroke="#1a3a8a" stroke-width="1"/>
<path d="M1507.5,72 H1521.5 M1514.5,66.5 V77.5" stroke="#dfe8f8" stroke-width="0.9"/>
<path d="M1509.5,69.3 H1512.5 M1516.5,69.3 H1519.5 M1509.5,74.7 H1512.5 M1516.5,74.7 H1519.5" stroke="#dfe8f8" stroke-width="0.7"/>
</g>
<path d="M1503,105 H1509 L1506,108Z" fill="#eee"/>
</svg>
<div class="t" style="left:1436px;top:88px;width:140px;text-align:center;color:#f2f2f2">Визуализация до размера</div>
<div class="a" style="left:1589px;top:50px;width:100px;height:21px;background:linear-gradient(#666,#525252);border:1px solid #262626"></div>
<div class="t" style="left:1592px;top:54px;color:#f2f2f2">Среднее</div>
<div class="a" style="left:1589px;top:73px;width:100px;height:21px;background:linear-gradient(#666,#525252);border:1px solid #262626"></div>
<div class="t" style="left:1592px;top:77px;color:#f2f2f2">Визуализаци...</div>
<div class="a" style="left:1589px;top:96px;width:100px;height:22px;background:#ececec;border:1px solid #aaa"></div>
<div class="a" style="left:1609px;top:106px;width:79px;height:1px;background:#cfcfcf"></div>
<div class="a" style="left:1590px;top:97px;width:20px;height:20px;background:#d8d8d8"></div>
<svg style="left:0;top:0" width="1700" height="140">
<path d="M1678,59 H1686 L1682,63Z" fill="#f0f0f0"/><path d="M1678,82 H1686 L1682,86Z" fill="#f0f0f0"/>
<path d="M1593,102 L1597,104.5 Q1597,108.5 1601,109.5 H1603 Q1607,108.5 1607,104.5 L1609,102.5 Q1608,101.5 1606.5,102.5 Q1604,101 1600,101.5 Q1598,101.5 1597,102.5Z" fill="#d4d4d4" stroke="#222" stroke-width="0.9"/><rect x="1599.5" y="99.5" width="3" height="2" fill="#333"/>
<rect x="1594.5" y="111" width="13" height="2.6" rx="1.3" fill="#4fb84a" stroke="#2a6a2a" stroke-width="0.6"/>
</svg>

<!-- ===== A360 ===== -->
<svg style="left:0;top:0" width="1870" height="140">
<defs><linearGradient id="tpg" x1="0" y1="0" x2="1" y2="0"><stop offset="0" stop-color="#f4f4f4"/><stop offset="1" stop-color="#a8a8a8"/></linearGradient></defs>
<path d="M1720.5,61 L1727,65 Q1727,72 1732,75.5 H1740 Q1746,72 1746,65 Q1746,59.5 1741,57.5 H1731 Q1727.5,58.5 1727.5,62Z" fill="url(#tpg)"/>
<path d="M1745,60 Q1750,60 1749.5,65 Q1749,69 1745,71" fill="none" stroke="#2a2a2a" stroke-width="1.8"/>
<ellipse cx="1736" cy="57" rx="4.5" ry="1.5" fill="#ddd"/><rect x="1735" y="53.5" width="2.5" height="3" fill="#333"/>
<path d="M1734.5,79 Q1733.5,74.5 1737.5,74 Q1739,70 1743.5,70.5 Q1747.5,71 1748,74.5 Q1750.5,75 1750.5,77.5 Q1750.5,79 1749,79Z" fill="#eef0f8" stroke="#1a3a8a" stroke-width="1.6"/>
<g fill="#e4e4e4" stroke="#1e1e1e" stroke-width="1"><rect x="1803.5" y="53.5" width="6.5" height="7"/><rect x="1813.5" y="53.5" width="6.5" height="7"/><rect x="1824" y="53.5" width="6.5" height="7"/></g>
<rect x="1803.5" y="63.5" width="27" height="17" fill="#a9aebb" stroke="#1e1e1e" stroke-width="1"/>
<rect x="1810.5" y="65.5" width="13" height="12.5" fill="#f4f4f4" stroke="#333" stroke-width="0.8"/><path d="M1811.5,77 L1815.5,71 L1818,73.5 L1822.5,77Z" fill="#3a3a3a"/><circle cx="1820.5" cy="68.5" r="1.5" fill="#f6d040"/>
</svg>
<div class="t" style="left:1685px;top:88px;width:100px;text-align:center;color:#f2f2f2">Визуализация</div>
<div class="t" style="left:1685px;top:103px;width:100px;text-align:center;color:#f2f2f2">в облаке</div>
<div class="t" style="left:1767px;top:88px;width:100px;text-align:center;color:#f2f2f2">Галерея</div>
<div class="t" style="left:1767px;top:103px;width:100px;text-align:center;color:#f2f2f2">визуализации</div>

<!-- label dropdowns & launchers -->
<svg style="left:0;top:0" width="1920" height="145">
<g fill="#eee">
<path d="M789,131 H797 L793,135Z"/><path d="M943,131 H951 L947,135Z"/><path d="M1146,131 H1154 L1150,135Z"/><path d="M1296,131 H1304 L1300,135Z"/><path d="M1587,131 H1595 L1591,135Z"/>
</g>
<g fill="none" stroke="#ddd" stroke-width="1">
<path d="M424,130 L430,136 M427,136 H430 V133"/><path d="M813,130 L819,136 M816,136 H819 V133"/><path d="M973,130 L979,136 M976,136 H979 V133"/><path d="M1161,130 L1167,136 M1164,136 H1167 V133"/><path d="M1359,130 L1365,136 M1362,136 H1365 V133"/><path d="M1680,130 L1686,136 M1683,136 H1686 V133"/>
</g>
</svg>

<!-- App button -->
<div class="a" style="left:92px;top:1px;width:40px;height:40px;background:linear-gradient(#e2e2e2,#bcbcbc 50%,#8c8c8c);border:1px solid #1e1e1e"></div>
<svg style="left:92px;top:1px" width="40" height="40">
<defs><linearGradient id="acadA" x1="0" y1="0" x2="1" y2="1"><stop offset="0" stop-color="#e0242c"/><stop offset="1" stop-color="#a8141c"/></linearGradient></defs>
<path d="M4,28 L12.5,2.5 H19.5 L27,28 H21 L16.5,10.5 L10,28Z" fill="url(#acadA)"/>
<path d="M12.5,2.5 H15.5 L8,28 H4Z" fill="#c01820"/>
<path d="M5,26 Q12,17 24,18.5 L25,22 Q14,20.5 7,28.5Z" fill="#e84a50" opacity="0.85"/>
<path d="M4,28 L6.5,20 Q8,26 10,28Z" fill="#f08088" opacity="0.6"/>
<path d="M31.5,17.5 H38 L34.75,21.5Z" fill="#1a1a1a"/>
</svg>

<!-- ============ FILE TABS ============ -->
<div class="a" style="left:91px;top:143px;width:1829px;height:30px;background:#3a3a3a"></div>
<svg style="left:0;top:140px" width="420" height="34">
<defs>
<linearGradient id="ft1" x1="0" y1="0" x2="0" y2="1"><stop offset="0" stop-color="#5c5c5c"/><stop offset="1" stop-color="#474747"/></linearGradient>
<linearGradient id="ft2" x1="0" y1="0" x2="0" y2="1"><stop offset="0" stop-color="#6e6e6e"/><stop offset="1" stop-color="#5a5a5a"/></linearGradient>
</defs>
<path d="M101,29.5 C110,29 111,26 113,17 C115,9 117,7.5 125,7.5 H222 C231,7.5 233,10 234,18 C235,26 237,29 245,29.5Z" fill="url(#ft1)"/>
<path d="M230,29.5 C238,29 239,26 241,17 C243,9 245,7.5 253,7.5 H349 C357,7.5 359,10 360,18 C361,26 363,29 372,29.5Z" fill="url(#ft2)"/>
<path d="M366,12 C367,11 368,11 371,11 H377 C384,11 386,14 387,20 C388,25 389,26 390,26.5 H372 C369,26 368,24 367,20Z" fill="#4c4c4c"/>
<path d="M338.5,14.5 L345.5,21.5 M345.5,14.5 L338.5,21.5" stroke="#3a3a3a" stroke-width="2"/>
<path d="M377,13.5 V22.5 M372.5,18 H381.5" stroke="#eee" stroke-width="2"/>
</svg>
<div class="a" style="left:91px;top:169px;width:1829px;height:4px;background:#5a5a5a"></div>
<div class="t" style="left:123px;top:152px;color:#c6c6c6">Начало</div>
<div class="t" style="left:247px;top:152px;color:#f2f2f2">Чертеж1*</div>

<!-- ============ VIEWPORTS ============ -->
<div class="a" style="left:91px;top:173px;width:1829px;height:877px;background:#3c3d40"></div>
<div class="a" style="left:91px;top:173px;width:912px;height:437px;background:#212830"></div>
<div class="a" style="left:1008px;top:173px;width:912px;height:437px;background:#212830"></div>
<div class="a" style="left:91px;top:615px;width:912px;height:435px;background:#212830"></div>
<div class="a" style="left:1008px;top:615px;width:912px;height:435px;background:#212830"></div>
<svg style="left:0;top:0" width="1920" height="1080" viewBox="0 0 1920 1080">
<defs>
<linearGradient id="tlup" x1="0" y1="0" x2="0" y2="1"><stop offset="0" stop-color="#8f8f8f"/><stop offset="1" stop-color="#a2a2a2"/></linearGradient>
<linearGradient id="tllo" x1="0" y1="0" x2="0" y2="1"><stop offset="0" stop-color="#a6a6a5"/><stop offset="0.5" stop-color="#b5b6b3"/><stop offset="1" stop-color="#b2b3b0"/></linearGradient>
<linearGradient id="trs1" gradientUnits="userSpaceOnUse" x1="1278" y1="0" x2="1371" y2="0"><stop offset="0" stop-color="#858585"/><stop offset="0.25" stop-color="#a8a8a7"/><stop offset="0.6" stop-color="#b2b3b0"/><stop offset="1" stop-color="#b4b5b2"/></linearGradient>
<linearGradient id="trs2" gradientUnits="userSpaceOnUse" x1="1371" y1="0" x2="1555" y2="0"><stop offset="0" stop-color="#a9aaa8"/><stop offset="0.5" stop-color="#b3b4b1"/><stop offset="0.75" stop-color="#b2b3b0"/><stop offset="1" stop-color="#9b9b9b"/></linearGradient>
<linearGradient id="trs3" gradientUnits="userSpaceOnUse" x1="1555" y1="0" x2="1648" y2="0"><stop offset="0" stop-color="#a0a0a0"/><stop offset="0.5" stop-color="#888888"/><stop offset="1" stop-color="#878787"/></linearGradient>
</defs>
<!-- TL U shape -->
<path d="M476.5,299 H511.5 V323.5 H476.5 Z" fill="url(#tlup)"/>
<path d="M579.5,299 H617 V323.5 H579.5 Z" fill="url(#tlup)"/>
<path d="M476.5,323.5 H511.5 V371.5 H579.5 V323.5 H617 V483.5 H476.5 Z" fill="url(#tllo)"/>
<path d="M476.5,299 H511.5 V371.5 H579.5 V299 H617 V483.5 H476.5 Z M476.5,323.5 H511.5 M579.5,323.5 H617" fill="none" stroke="#f4f4f4" stroke-width="1.3"/>
<!-- TR rect -->
<rect x="1278.5" y="320.5" width="93" height="141" fill="url(#trs1)"/>
<rect x="1371.5" y="320.5" width="184" height="141" fill="url(#trs2)"/>
<rect x="1555.5" y="320.5" width="93" height="141" fill="url(#trs3)"/>
<rect x="1316.5" y="357.5" width="294" height="69" fill="#b1b2af"/>
<path d="M1278.5,320.5 H1648.5 V461.5 H1278.5 Z M1316.5,357.5 H1610.5 V426.5 H1316.5 Z M1371.5,320.5 V357.5 M1555.5,320.5 V357.5 M1371.5,426.5 V461.5 M1555.5,426.5 V461.5" fill="none" stroke="#f4f4f4" stroke-width="1.2"/>
<!-- BL semicircle -->
<path d="M360.2,924.5 A184,184 0 0 1 728.4,924.5 Z" fill="#b3b4b1" stroke="#f4f4f4" stroke-width="1.3"/>
<line x1="398.5" y1="812" x2="690" y2="812" stroke="#f4f4f4" stroke-width="1.3"/>
<!-- BR iso -->
<defs><linearGradient id="brband" gradientUnits="userSpaceOnUse" x1="1268" y1="0" x2="1582" y2="0">
<stop offset="0" stop-color="#c6c7c4"/><stop offset="0.45" stop-color="#bdbebb"/><stop offset="0.6" stop-color="#b2b3b0"/><stop offset="0.8" stop-color="#9c9c9c"/><stop offset="1" stop-color="#8a8a8a"/></linearGradient>
<linearGradient id="brmed" gradientUnits="userSpaceOnUse" x1="1373" y1="0" x2="1580" y2="0">
<stop offset="0" stop-color="#898a88"/><stop offset="0.6" stop-color="#9a9b99"/><stop offset="1" stop-color="#8e8e8e"/></linearGradient></defs>
<path d="M1268.5,736.7 L1276.4,732.4 L1284.7,728.4 L1293.4,724.7 L1302.4,721.3 L1311.8,718.2 L1321.5,715.4 L1331.4,712.9 L1341.6,710.8 L1352.0,709.1 L1362.6,707.7 L1373.2,706.6 L1384.0,706.0 L1394.8,705.7 L1405.6,705.7 L1416.4,706.1 L1427.1,706.9 L1437.8,708.1 L1448.3,709.6 L1458.6,711.5 L1468.7,713.7 L1478.6,716.3 L1488.2,719.2 L1497.4,722.4 L1506.4,725.9 L1514.9,729.7 L1523.1,733.8 L1530.8,738.2 L1538.1,742.8 L1544.9,747.7 L1551.1,752.8 L1556.9,758.1 L1562.1,763.5 L1566.7,769.2 L1570.8,775.0 L1574.2,780.9 L1577.0,786.9 L1579.2,793.1 L1580.8,799.2 L1581.8,805.5 L1582.1,811.7 L1582.1,926.2 L1582.1,928.3 L1582.0,930.4 L1581.8,932.4 L1581.5,934.5 L1581.2,936.6 L1580.8,938.7 L1580.4,940.7 L1579.8,942.8 L1579.2,944.8 L1578.6,946.9 L1577.8,948.9 L1577.0,951.0 L1576.2,953.0 L1575.2,955.0 L1574.2,957.0 L1573.1,959.0 L1572.0,961.0 L1570.8,962.9 L1569.5,964.9 L1568.1,966.8 L1566.7,968.7 L1565.2,970.6 L1563.7,972.5 L1562.1,974.4 L1560.4,976.2 L1558.7,978.0 L1556.9,979.8 L1555.0,981.6 L1553.1,983.4 L1551.1,985.1 L1549.1,986.8 L1547.0,988.5 L1544.9,990.2 L1542.7,991.9 L1540.4,993.5 L1538.1,995.1 L1535.7,996.7 L1533.3,998.2 L1530.8,999.7 L1528.3,1001.2 L1268.5,851.2 Z" fill="#616161"/>
<path d="M1268.5,736.7 L1276.4,732.4 L1284.7,728.4 L1293.4,724.7 L1302.4,721.3 L1311.8,718.2 L1321.5,715.4 L1331.4,712.9 L1341.6,710.8 L1352.0,709.1 L1362.6,707.7 L1373.2,706.6 L1384.0,706.0 L1394.8,705.7 L1405.6,705.7 L1416.4,706.1 L1427.1,706.9 L1437.8,708.1 L1448.3,709.6 L1458.6,711.5 L1468.7,713.7 L1478.6,716.3 L1488.2,719.2 L1497.4,722.4 L1506.4,725.9 L1514.9,729.7 L1523.1,733.8 L1530.8,738.2 L1538.1,742.8 L1544.9,747.7 L1551.1,752.8 L1556.9,758.1 L1562.1,763.5 L1566.7,769.2 L1570.8,775.0 L1574.2,780.9 L1577.0,786.9 L1579.2,793.1 L1580.8,799.2 L1581.8,805.5 L1582.1,811.7 L1582.1,926.2 L1581.8,920.0 L1580.8,913.7 L1579.2,907.6 L1577.0,901.4 L1574.2,895.4 L1570.8,889.5 L1566.7,883.7 L1562.1,878.0 L1556.9,872.6 L1551.1,867.3 L1544.9,862.2 L1538.1,857.3 L1530.8,852.7 L1523.1,848.3 L1514.9,844.2 L1506.4,840.4 L1497.4,836.9 L1488.2,833.7 L1478.6,830.8 L1468.7,828.2 L1458.6,826.0 L1448.3,824.1 L1437.8,822.6 L1427.1,821.4 L1416.4,820.6 L1405.6,820.2 L1394.8,820.2 L1384.0,820.5 L1373.2,821.1 L1362.6,822.2 L1352.0,823.6 L1341.6,825.3 L1331.4,827.4 L1321.5,829.9 L1311.8,832.7 L1302.4,835.8 L1293.4,839.2 L1284.7,842.9 L1276.4,846.9 L1268.5,851.2 Z" fill="url(#brband)"/>
<path d="M1374.7,737.5 L1382.5,737.0 L1390.3,736.7 L1398.1,736.6 L1405.9,736.7 L1413.7,737.0 L1421.4,737.5 L1429.2,738.1 L1436.8,739.0 L1444.4,740.0 L1451.9,741.2 L1459.4,742.6 L1466.7,744.2 L1473.8,746.0 L1480.9,747.9 L1487.8,750.0 L1494.5,752.3 L1501.1,754.8 L1507.5,757.4 L1513.7,760.1 L1519.6,763.0 L1525.4,766.1 L1530.9,769.2 L1536.2,772.6 L1541.2,776.0 L1546.0,779.6 L1550.5,783.2 L1554.8,787.0 L1558.7,790.9 L1562.4,794.9 L1565.8,799.0 L1568.8,803.1 L1571.6,807.3 L1574.0,811.6 L1576.2,815.9 L1578.0,820.3 L1579.5,824.8 L1580.6,829.2 L1581.4,833.7 L1581.9,838.2 L1582.1,842.7 L1582.1,898.1 L1581.9,893.6 L1581.4,889.1 L1580.6,884.6 L1579.5,880.2 L1578.0,875.7 L1576.2,871.3 L1574.0,867.0 L1571.6,862.7 L1568.8,858.5 L1565.8,854.4 L1562.4,850.3 L1558.7,846.3 L1554.8,842.4 L1550.5,838.6 L1546.0,835.0 L1541.2,831.4 L1536.2,828.0 L1530.9,824.6 L1525.4,821.5 L1519.6,818.4 L1513.7,815.5 L1507.5,812.8 L1501.1,810.2 L1494.5,807.7 L1487.8,805.4 L1480.9,803.3 L1473.8,801.4 L1466.7,799.6 L1459.4,798.0 L1451.9,796.6 L1444.4,795.4 L1436.8,794.4 L1429.2,793.5 L1421.4,792.9 L1413.7,792.4 L1405.9,792.1 L1398.1,792.0 L1390.3,792.1 L1382.5,792.4 L1374.7,792.9 Z" fill="#616161"/>
<path d="M1374.7,737.5 L1499.5,809.6 L1499.5,809.5 L1496.8,808.5 L1494.0,807.5 L1491.2,806.6 L1488.3,805.6 L1485.5,804.7 L1482.6,803.8 L1479.7,803.0 L1476.7,802.2 L1473.7,801.4 L1470.7,800.6 L1467.7,799.9 L1464.7,799.2 L1461.6,798.5 L1458.5,797.9 L1455.4,797.3 L1452.3,796.7 L1449.2,796.2 L1446.0,795.7 L1442.9,795.2 L1439.7,794.7 L1436.5,794.3 L1433.3,794.0 L1430.1,793.6 L1426.9,793.3 L1423.6,793.0 L1420.4,792.8 L1417.1,792.6 L1413.9,792.4 L1410.6,792.3 L1407.3,792.2 L1404.1,792.1 L1400.8,792.0 L1397.5,792.0 L1394.3,792.1 L1391.0,792.1 L1387.7,792.2 L1384.5,792.3 L1381.2,792.5 L1378.0,792.7 L1374.7,792.9 Z" fill="url(#brmed)"/>
<path d="M1268.5,736.7 L1275.5,732.9 L1282.8,729.3 L1290.4,725.9 L1298.3,722.7 L1306.5,719.8 L1315.0,717.2 L1323.7,714.8 L1332.6,712.7 L1341.6,710.8 L1350.9,709.2 L1360.2,708.0 L1369.7,706.9 L1379.2,706.2 L1388.8,705.8 L1398.4,705.6 L1408.0,705.8 L1417.6,706.2 L1427.1,706.9 L1436.6,708.0 L1445.9,709.2 L1455.2,710.8 L1464.2,712.7 L1473.1,714.8 L1481.8,717.2 L1490.3,719.8 L1498.5,722.7 L1506.4,725.9 L1514.0,729.3 L1521.3,732.9 L1528.3,736.7 L1534.9,740.7 L1541.2,745.0 L1547.0,749.4 L1552.5,753.9 L1557.5,758.7 L1562.1,763.5 L1566.2,768.6 L1569.9,773.7 L1573.1,778.9 L1575.8,784.2 L1578.1,789.6 L1579.8,795.1 L1581.1,800.6 L1581.9,806.1 L1582.1,811.7 L1581.9,817.3 L1581.1,822.8 L1579.8,828.3 L1578.1,833.8 L1575.8,839.2 L1573.1,844.5 L1569.9,849.7 L1566.2,854.8 L1562.1,859.9 L1557.5,864.7 L1552.5,869.5 L1547.0,874.0 L1541.2,878.4 L1534.9,882.7 L1528.3,886.7 M1268.5,851.2 L1275.5,847.4 L1282.8,843.8 L1290.4,840.4 L1298.3,837.2 L1306.5,834.3 L1315.0,831.7 L1323.7,829.3 L1332.6,827.2 L1341.6,825.3 L1350.9,823.7 L1360.2,822.5 L1369.7,821.4 L1379.2,820.7 L1388.8,820.3 L1398.4,820.1 L1408.0,820.3 L1417.6,820.7 L1427.1,821.4 L1436.6,822.5 L1445.9,823.7 L1455.2,825.3 L1464.2,827.2 L1473.1,829.3 L1481.8,831.7 L1490.3,834.3 L1498.5,837.2 L1506.4,840.4 L1514.0,843.8 L1521.3,847.4 L1528.3,851.2 L1534.9,855.2 L1541.2,859.5 L1547.0,863.9 L1552.5,868.4 L1557.5,873.2 L1562.1,878.0 L1566.2,883.1 L1569.9,888.2 L1573.1,893.4 L1575.8,898.7 L1578.1,904.1 L1579.8,909.6 L1581.1,915.1 L1581.9,920.6 L1582.1,926.2 L1581.9,931.8 L1581.1,937.3 L1579.8,942.8 L1578.1,948.3 L1575.8,953.7 L1573.1,959.0 L1569.9,964.2 L1566.2,969.3 L1562.1,974.4 L1557.5,979.2 L1552.5,984.0 L1547.0,988.5 L1541.2,992.9 L1534.9,997.2 L1528.3,1001.2 M1268.5,736.7 L1528.3,886.7 M1268.5,851.2 L1528.3,1001.2 M1268.5,736.7 L1268.5,851.2 M1528.3,886.7 L1528.3,1001.2 M1374.7,737.5 L1381.4,737.1 L1388.1,736.8 L1394.8,736.7 L1401.5,736.6 L1408.2,736.8 L1414.9,737.1 L1421.6,737.5 L1428.3,738.0 L1434.9,738.7 L1441.5,739.6 L1448.0,740.6 L1454.4,741.7 L1460.8,742.9 L1467.0,744.3 L1473.2,745.8 L1479.3,747.5 L1485.3,749.2 L1491.2,751.1 L1496.9,753.2 L1502.5,755.3 L1508.0,757.6 L1513.3,759.9 L1518.5,762.4 L1523.5,765.0 L1528.3,767.7 L1533.0,770.5 L1537.4,773.4 L1541.7,776.4 L1545.9,779.4 L1549.8,782.6 L1553.5,785.8 L1557.0,789.1 L1560.3,792.5 L1563.3,796.0 L1566.2,799.5 L1568.8,803.1 L1571.2,806.7 L1573.4,810.4 L1575.3,814.1 L1577.0,817.8 L1578.4,821.6 L1579.7,825.4 L1580.6,829.3 L1581.4,833.1 L1581.8,837.0 L1582.1,840.9 L1582.1,844.8 L1581.8,848.7 L1581.3,852.5 L1580.6,856.4 M1374.7,792.9 L1381.4,792.5 L1388.1,792.2 L1394.8,792.1 L1401.5,792.0 L1408.2,792.2 L1414.9,792.5 L1421.6,792.9 L1428.3,793.4 L1434.9,794.1 L1441.5,795.0 L1448.0,796.0 L1454.4,797.1 L1460.8,798.3 L1467.0,799.7 L1473.2,801.2 L1479.3,802.9 L1485.3,804.6 L1491.2,806.5 L1496.9,808.6 L1502.5,810.7 L1508.0,813.0 L1513.3,815.3 L1518.5,817.8 L1523.5,820.4 L1528.3,823.1 L1533.0,825.9 L1537.4,828.8 L1541.7,831.8 L1545.9,834.8 L1549.8,838.0 L1553.5,841.2 L1557.0,844.5 L1560.3,847.9 L1563.3,851.4 L1566.2,854.9 L1568.8,858.5 L1571.2,862.1 L1573.4,865.8 L1575.3,869.5 L1577.0,873.2 L1578.4,877.0 L1579.7,880.8 L1580.6,884.7 L1581.4,888.5 L1581.8,892.4 L1582.1,896.3 L1582.1,900.2 L1581.8,904.1 L1581.3,907.9 L1580.6,911.8 M1374.7,737.5 L1580.6,856.4 M1374.7,792.9 L1580.6,911.8 M1374.7,737.5 L1374.7,792.9 M1580.6,856.4 L1580.6,911.8 M1582.1,811.7 L1582.1,842.7 M1582.1,898.1 L1582.1,926.2 M1575.8,784.2 L1575.8,815.2 M1575.8,870.6 L1575.8,898.7 M1445.9,709.2 L1445.9,740.2 M1445.9,795.6 L1445.9,823.7" fill="none" stroke="#f4f4f4" stroke-width="1.1"/>
</svg>
<!-- ============ VIEWPORT OVERLAYS ============ -->
<!-- separators small marks -->
<svg style="left:0;top:0" width="1920" height="1080">
<!-- TL viewcube (rotated, dim) -->
<path d="M933,184 C930,210 930,240 933,267 C936,240 936,210 933,184Z" fill="none" stroke="#4a5058" stroke-width="1"/>
<rect x="935" y="208" width="32" height="31" fill="#5a5f67"/>
<text x="0" y="0" transform="translate(946,212) rotate(90)" font-family="Liberation Sans" font-size="8.5" fill="#41464d">Слева</text>
<rect x="927.5" y="279" width="46" height="17" rx="5" fill="#474c53"/>
<text x="931" y="291" font-family="Liberation Sans" font-size="11" fill="#363b42">MCK</text>
<!-- TR viewport controls -->
<rect x="1859" y="188" width="10" height="2.5" fill="#f0f0f0"/>
<rect x="1880" y="185" width="7" height="7" fill="none" stroke="#f0f0f0" stroke-width="1.8"/>
<path d="M1882,183 H1889.5 V190" fill="none" stroke="#f0f0f0" stroke-width="1.2"/>
<path d="M1899.5,184.5 L1907.5,192.5 M1907.5,184.5 L1899.5,192.5" stroke="#f0f0f0" stroke-width="2"/>
<!-- TR viewcube -->
<rect x="1852" y="232" width="32" height="32" fill="#5a5f67"/>
<text x="1856" y="252" font-family="Liberation Sans" font-size="9" fill="#41464d">Сзади</text>
<ellipse cx="1868" cy="266" rx="41" ry="3" fill="none" stroke="#3e434a" stroke-width="1.2"/>
<rect x="1844" y="302.5" width="47" height="16.5" rx="5" fill="#474c53"/>
<text x="1848" y="314.5" font-family="Liberation Sans" font-size="11" fill="#363b42">MCK</text>
<!-- BL viewcube -->
<circle cx="951.5" cy="665" r="31.5" fill="none" stroke="#363c44" stroke-width="7"/>
<rect x="936" y="649" width="32" height="32" fill="#5a5f67"/>
<text x="940" y="668" font-family="Liberation Sans" font-size="9" fill="#41464d">Верх</text>
<text x="951.5" y="636" text-anchor="middle" font-family="Liberation Sans" font-size="12" fill="#80858c">С</text>
<text x="918" y="669.5" text-anchor="middle" font-family="Liberation Sans" font-size="12" fill="#80858c">З</text>
<text x="985.5" y="669.5" text-anchor="middle" font-family="Liberation Sans" font-size="12" fill="#80858c">В</text>
<text x="951.5" y="703.5" text-anchor="middle" font-family="Liberation Sans" font-size="12" fill="#80858c">Ю</text>
<rect x="927" y="719.5" width="46.5" height="17" rx="5" fill="#474c53"/>
<text x="931" y="731.5" font-family="Liberation Sans" font-size="11" fill="#363b42">MCK</text>
<!-- BR border -->
<rect x="1010.8" y="617.3" width="905.4" height="429.5" fill="none" stroke="#1c6fd6" stroke-width="2.6"/>
<!-- BR viewcube -->
<ellipse cx="1869" cy="676.6" rx="37.2" ry="17.7" fill="none" stroke="#50555c" stroke-width="9"/>
<path d="M1869.6,641 L1888.5,654.3 L1889.8,676.6 L1869,687.4 L1848.5,677.2 L1849.7,654.3Z" fill="#c2c2c2"/>
<path d="M1869.6,641 L1888.5,654.3 H1849.7Z" fill="#d4d4d4"/>
<path d="M1869.6,665 L1889.8,676.6 L1869,687.4 L1848.5,677.2Z" fill="#cbcbcb"/>
<path d="M1849.7,654.3 H1888.5 M1849.7,660.5 H1888.5" stroke="#9a9a9a" stroke-width="0.6"/>
<path d="M1869.6,641 V665 L1848.5,677.2 M1869.6,665 L1889.8,676.6" fill="none" stroke="#555" stroke-width="0.8"/>
<text x="1852" y="665" font-family="Liberation Sans" font-size="6" fill="#444" transform="rotate(-28 1859 662)">Спер</text>
<text x="1872" y="659" font-family="Liberation Sans" font-size="6" fill="#444" transform="rotate(28 1879 662)">Сзади</text>
<text x="1864" y="678" font-family="Liberation Sans" font-size="5.5" fill="#444" transform="rotate(25 1869 676)">Низ</text>
<g font-family="Liberation Sans" font-size="9.5" fill="none" stroke="#e0e0e0" stroke-width="0.9" text-anchor="middle">
<text x="0" y="3.5" transform="translate(1839,663.3) rotate(-72) scale(1,0.85)">В</text>
<text x="0" y="3.5" transform="translate(1899.7,662.7) rotate(72) scale(1,0.85)">С</text>
<text x="0" y="3.5" transform="translate(1845,692) rotate(-150) scale(1,0.8)">Ю</text>
<text x="0" y="3.5" transform="translate(1894.3,692.2) rotate(150) scale(1,0.8)">З</text>
</g>
<rect x="1844.5" y="719.5" width="46" height="16.5" rx="5" fill="#b6b9c2" stroke="#cfd2d8" stroke-width="1"/>
<text x="1848.5" y="732" font-family="Liberation Sans" font-size="11.5" fill="#4a4e56">MCK</text>
<path d="M1877.5,724.5 H1885.5 L1881.5,729.5Z" fill="none" stroke="#7a7e86" stroke-width="0.9"/>
<!-- nav bar -->
<rect x="1884" y="761.5" width="31" height="212.5" rx="3" fill="#575c63"/>
<g fill="none" stroke="#40444a" stroke-width="1.1">
<circle cx="1910" cy="767" r="3.5"/><path d="M1908,765 L1912,769 M1912,765 L1908,769"/>
<path d="M1899.5,781 A10,10 0 1 1 1890,792 V781Z"/><circle cx="1900" cy="791" r="5.5"/><path d="M1896,795 L1892,799 M1904,795 L1908,799"/>
<path d="M1891,833 Q1895,842 1903,842 Q1909,840 1909,832 V824 M1891,833 L1889,829 M1897,836 V822 M1901,836 V821 M1905,836 V823"/>
<path d="M1889,853 L1899,863 M1899,853 L1889,863 M1889,853 H1893 M1889,853 V857 M1899,853 H1895 M1899,853 V857 M1889,863 V859 M1889,863 H1893"/><circle cx="1904" cy="867" r="4.5"/><path d="M1907,870 L1911,874"/>
<path d="M1899,890 L1895,895 H1897.5 V910 H1900.5 V895 H1903Z"/><ellipse cx="1899" cy="902" rx="10" ry="4"/>
<rect x="1888" y="932" width="6" height="6"/><rect x="1896" y="932" width="6" height="6"/><rect x="1904" y="932" width="6" height="6"/>
<rect x="1888" y="941" width="18" height="12"/><path d="M1894,943 L1901,947 L1894,951Z" fill="#40444a"/>
<circle cx="1910" cy="967" r="3.5"/>
</g>
<g fill="#40444a"><path d="M1897,810.5 H1903 L1900,813.5Z"/><path d="M1897,880.5 H1903 L1900,883.5Z"/><path d="M1897,919.5 H1903 L1900,922.5Z"/></g>
<!-- UCS icon -->
<path d="M1024,980 L1058.6,999" stroke="#c47a7e" stroke-width="3.2" stroke-linecap="round"/>
<path d="M1058.6,999 L1092.6,979.5" stroke="#3e9e3e" stroke-width="3.6" stroke-linecap="round"/>
<path d="M1058.6,997 V959" stroke="#5b8ad6" stroke-width="3"/>
<path d="M1020.5,963.5 L1031.5,975.5 M1031.5,963.5 L1020.5,975.5" stroke="#d23a3a" stroke-width="0.9"/>
<path d="M1090,963.5 L1096,969 L1102,963.5 M1096,969 V975" fill="none" stroke="#2ea82e" stroke-width="1"/>
<path d="M1057,943 H1069 L1057,955.5 H1069" fill="none" stroke="#2a62d8" stroke-width="1.2"/>
<!-- separator marks -->
<path d="M1005.5,180 V187 M1002,183.5 H1009" stroke="#aaa" stroke-width="1"/>
<path d="M100.5,609 V615 M97.5,612 H103.5" stroke="#888" stroke-width="0.8"/>
<path d="M1895.5,609 V615 M1892.5,612 H1898.5" stroke="#888" stroke-width="0.8"/>
<path d="M541,611 H553 M541,613 H553" stroke="#777" stroke-width="0.8"/>
<path d="M1458,611 H1470 M1458,613 H1470" stroke="#777" stroke-width="0.8"/>
<path d="M1004.5,385 V397 M1006.5,385 V397" stroke="#777" stroke-width="0.8"/>
<path d="M1004.5,826 V838 M1006.5,826 V838" stroke="#777" stroke-width="0.8"/>
</svg>
<div class="t" style="left:1012px;top:621px;color:#e8e8e8;font-size:12px">[+][Пользовательский вид][Текущий]</div>

<!-- ============ COMMAND LINE ============ -->
<div class="a" style="left:136px;top:1024px;width:55px;height:26px;background:linear-gradient(#6a6a6a,#4a4a4a 50%,#3e3e3e);border-radius:3px 0 0 0"></div>
<div class="a" style="left:190px;top:1025px;width:1685px;height:25px;background:#c3c3c3"></div>
<div class="a" style="left:1010px;top:1046px;width:865px;height:2.5px;background:#b2d2f2"></div>
<div class="a" style="left:1009.5px;top:1025px;width:2.5px;height:23px;background:#b2d2f2"></div>
<svg style="left:0;top:0" width="1920" height="1080">
<g fill="#9c9c9c"><rect x="140" y="1028" width="2" height="2"/><rect x="143" y="1028" width="2" height="2"/><rect x="140" y="1031" width="2" height="2"/><rect x="143" y="1031" width="2" height="2"/><rect x="140" y="1034" width="2" height="2"/><rect x="143" y="1034" width="2" height="2"/><rect x="140" y="1037" width="2" height="2"/><rect x="143" y="1037" width="2" height="2"/><rect x="140" y="1040" width="2" height="2"/><rect x="143" y="1040" width="2" height="2"/><rect x="140" y="1043" width="2" height="2"/><rect x="143" y="1043" width="2" height="2"/></g>
<path d="M151.5,1033.5 L160.5,1041 M160.5,1033.5 L151.5,1041" stroke="#d4d4d4" stroke-width="2"/>
<path d="M172.5,1035.5 Q171.5,1032 175,1030.5 L176.5,1030.5 L174.5,1033 L176,1034.5 L178,1032 Q179.5,1035.5 177.5,1037 L184.5,1042.5 L183,1044 L176,1038 Q173.5,1038 172.5,1035.5Z" fill="#d8d8d8" stroke="#111" stroke-width="0.9"/>
<rect x="195.5" y="1030.5" width="13" height="12" fill="#a4adbb" stroke="#5a6270" stroke-width="1"/>
<path d="M197.5,1033 L200.5,1035.5 L197.5,1038 M201.5,1040 H205.5" fill="none" stroke="#1a2030" stroke-width="1"/>
<path d="M212,1035 H217 L214.5,1038Z" fill="#777"/>
<path d="M1864,1039 H1872 L1868,1035Z" fill="#1a1a1a"/>
</svg>
<div class="t" style="left:226px;top:1030px;font-family:'Liberation Mono',monospace;font-style:italic;font-size:10.8px;color:#7c7c7c">Введите&nbsp;&nbsp;команду</div>

<!-- ============ STATUS BAR ============ -->
<div class="a" style="left:91px;top:1049px;width:1829px;height:31px;background:#3a3a3a"></div>
<div class="a" style="left:91px;top:1049px;width:1829px;height:1px;background:#2c2c2c"></div>
<svg style="left:0;top:1048px" width="320" height="32">
<defs><linearGradient id="lt1" x1="0" y1="0" x2="0" y2="1"><stop offset="0" stop-color="#8a8a8a"/><stop offset="1" stop-color="#5a5a5a"/></linearGradient>
<linearGradient id="lt2" x1="0" y1="0" x2="0" y2="1"><stop offset="0" stop-color="#585858"/><stop offset="1" stop-color="#4a4a4a"/></linearGradient></defs>
<path d="M100,3 C106,3 107,5 109,12 C111,18 112,20 117,20.5 H161 C165,20 166,18 168,12 C170,5 172,3 176,3Z" fill="url(#lt2)" opacity="0"/>
<path d="M101,3 H171 C167,5 166,8 165,13 C164,18 162,20.5 158,20.5 H116 C112,20.5 110,18 108.5,13 C107,8 105,4 101,3Z" fill="url(#lt1)"/>
<path d="M170,3 H227 C223,5 222,8 221,13 C220,18 218,20.5 214,20.5 H183 C179,20.5 177,18 176,13 C175,8 174,5 170,3Z" fill="url(#lt2)"/>
<path d="M226,3 H283 C279,5 278,8 277,13 C276,18 274,20.5 270,20.5 H239 C235,20.5 233,18 232,13 C231,8 230,5 226,3Z" fill="url(#lt2)"/>
<path d="M289,3 H310 C307,5 306,8 305,13 C304,18 302,20 298,20 H287 C285,17 285,13 287,8 C288,5 289,4 289,3Z" fill="url(#lt2)"/>
<path d="M296.5,7.5 V15.5 M292.5,11.5 H300.5" stroke="#e8e8e8" stroke-width="2"/>
</svg>
<div class="t" style="left:114px;top:1053px;font-weight:bold;color:#fff;font-size:12px">Модель</div>
<div class="t" style="left:183px;top:1053px;color:#c8c8c8;font-size:12px">Лист1</div>
<div class="t" style="left:239px;top:1053px;color:#c8c8c8;font-size:12px">Лист2</div>
<div class="a" style="left:1346px;top:1052px;width:58px;height:25px;background:#4b4b4b;border:1px solid #707070"></div>
<div class="a" style="left:1405px;top:1052px;width:65px;height:25px;background:#4b4b4b;border:1px solid #707070"></div>
<div class="a" style="left:1471px;top:1052px;width:103px;height:25px;background:#4b4b4b;border:1px solid #707070"></div>
<div class="a" style="left:1575px;top:1052px;width:64px;height:25px;background:#4b4b4b;border:1px solid #707070"></div>
<div class="a" style="left:1640px;top:1052px;width:108px;height:25px;background:#4b4b4b;border:1px solid #707070"></div>
<div class="a" style="left:1749px;top:1052px;width:40px;height:25px;background:#4b4b4b;border:1px solid #707070"></div>
<div class="a" style="left:1790px;top:1052px;width:24px;height:25px;background:#4b4b4b;border:1px solid #707070"></div>
<div class="a" style="left:1815px;top:1052px;width:26px;height:25px;background:#4b4b4b;border:1px solid #707070"></div>
<div class="a" style="left:1842px;top:1052px;width:28px;height:25px;background:#4b4b4b;border:1px solid #707070"></div>
<div class="a" style="left:1871px;top:1052px;width:25px;height:25px;background:#4b4b4b;border:1px solid #707070"></div>
<div class="a" style="left:1897px;top:1052px;width:23px;height:25px;background:#4b4b4b;border:1px solid #707070"></div>
<div class="t" style="left:1350px;top:1058px;color:#f2f2f2;font-size:11.5px">МОДЕЛЬ</div>
<svg style="left:0;top:0" width="1920" height="1080">
<g fill="#dcdcdc">
<rect x="1411.0" y="1058.0" width="1.2" height="1.2"/><rect x="1411.0" y="1060.2" width="1.2" height="1.2"/><rect x="1411.0" y="1062.4" width="1.2" height="1.2"/><rect x="1411.0" y="1064.6" width="1.2" height="1.2"/><rect x="1411.0" y="1066.8" width="1.2" height="1.2"/><rect x="1411.0" y="1069.0" width="1.2" height="1.2"/><rect x="1413.2" y="1058.0" width="1.2" height="1.2"/><rect x="1413.2" y="1060.2" width="1.2" height="1.2"/><rect x="1413.2" y="1062.4" width="1.2" height="1.2"/><rect x="1413.2" y="1064.6" width="1.2" height="1.2"/><rect x="1413.2" y="1066.8" width="1.2" height="1.2"/><rect x="1413.2" y="1069.0" width="1.2" height="1.2"/><rect x="1415.4" y="1058.0" width="1.2" height="1.2"/><rect x="1415.4" y="1060.2" width="1.2" height="1.2"/><rect x="1415.4" y="1062.4" width="1.2" height="1.2"/><rect x="1415.4" y="1064.6" width="1.2" height="1.2"/><rect x="1415.4" y="1066.8" width="1.2" height="1.2"/><rect x="1415.4" y="1069.0" width="1.2" height="1.2"/><rect x="1417.6" y="1058.0" width="1.2" height="1.2"/><rect x="1417.6" y="1060.2" width="1.2" height="1.2"/><rect x="1417.6" y="1062.4" width="1.2" height="1.2"/><rect x="1417.6" y="1064.6" width="1.2" height="1.2"/><rect x="1417.6" y="1066.8" width="1.2" height="1.2"/><rect x="1417.6" y="1069.0" width="1.2" height="1.2"/><rect x="1419.8" y="1058.0" width="1.2" height="1.2"/><rect x="1419.8" y="1060.2" width="1.2" height="1.2"/><rect x="1419.8" y="1062.4" width="1.2" height="1.2"/><rect x="1419.8" y="1064.6" width="1.2" height="1.2"/><rect x="1419.8" y="1066.8" width="1.2" height="1.2"/><rect x="1419.8" y="1069.0" width="1.2" height="1.2"/><rect x="1434.5" y="1058.0" width="1" height="1"/><rect x="1434.5" y="1061.0" width="1" height="1"/><rect x="1434.5" y="1064.0" width="1" height="1"/><rect x="1434.5" y="1067.0" width="1" height="1"/><rect x="1434.5" y="1070.0" width="1" height="1"/><rect x="1437.5" y="1058.0" width="1" height="1"/><rect x="1437.5" y="1061.0" width="1" height="1"/><rect x="1437.5" y="1064.0" width="1" height="1"/><rect x="1437.5" y="1067.0" width="1" height="1"/><rect x="1437.5" y="1070.0" width="1" height="1"/><rect x="1440.5" y="1058.0" width="1" height="1"/><rect x="1440.5" y="1061.0" width="1" height="1"/><rect x="1440.5" y="1064.0" width="1" height="1"/><rect x="1440.5" y="1067.0" width="1" height="1"/><rect x="1440.5" y="1070.0" width="1" height="1"/><rect x="1443.5" y="1058.0" width="1" height="1"/><rect x="1443.5" y="1061.0" width="1" height="1"/><rect x="1443.5" y="1064.0" width="1" height="1"/><rect x="1443.5" y="1067.0" width="1" height="1"/><rect x="1443.5" y="1070.0" width="1" height="1"/><rect x="1446.5" y="1058.0" width="1" height="1"/><rect x="1446.5" y="1061.0" width="1" height="1"/><rect x="1446.5" y="1064.0" width="1" height="1"/><rect x="1446.5" y="1067.0" width="1" height="1"/><rect x="1446.5" y="1070.0" width="1" height="1"/>
<path d="M1457,1062 H1465 L1461,1066.5Z"/>
<path d="M1522,1062 H1530 L1526,1066.5Z"/><path d="M1562,1062 H1570 L1566,1066.5Z"/>
<path d="M1626,1062 H1634 L1630,1066.5Z"/><path d="M1735,1062 H1743 L1739,1066.5Z"/><path d="M1776,1062 H1784 L1780,1066.5Z"/>
</g>
<path d="M1479.5,1055 V1070.5 H1492 M1479.5,1065 H1484 V1070.5" fill="none" stroke="#dcdcdc" stroke-width="1"/>
<circle cx="1508" cy="1064.5" r="6.5" fill="none" stroke="#2a86e8" stroke-width="1.8"/><path d="M1508,1064.5 L1515,1058 M1508,1064.5 H1515" stroke="#2a86e8" stroke-width="1.5"/>
<path d="M1539,1055 L1556,1073 M1547,1053 V1074" stroke="#cfcfcf" stroke-width="1"/>
<path d="M1579,1071 L1592,1059 M1579,1071 H1595" stroke="#2a86e8" stroke-width="1.8"/><circle cx="1585" cy="1065" r="1.5" fill="#2a86e8"/>
<rect x="1604.5" y="1057.5" width="14" height="13" fill="none" stroke="#2a86e8" stroke-width="1.8"/><rect x="1602" y="1055" width="4" height="4" fill="#2a2" stroke="#111" stroke-width="0.8"/>
<path d="M1645,1073 L1654,1058 L1663,1073 L1654,1066Z" fill="#2a86e8"/><circle cx="1657" cy="1058" r="3" fill="none" stroke="#2a86e8" stroke-width="1.5"/>
<path d="M1668,1073 L1677,1058 L1686,1073 L1677,1066Z" fill="#bdbdbd"/><path d="M1677,1056 L1681,1061 L1678,1062 L1682,1066" fill="none" stroke="#ddd" stroke-width="1"/>
<path d="M1691,1073 L1700,1057 L1709,1073 L1700,1066Z" fill="#bdbdbd"/>
<circle cx="1761" cy="1065" r="4.2" fill="#bdbdbd"/><circle cx="1761" cy="1065" r="5.5" fill="none" stroke="#bdbdbd" stroke-width="2" stroke-dasharray="2 1.6"/><circle cx="1761" cy="1065" r="1.8" fill="#4b4b4b"/>
<path d="M1801.5,1057 V1072 M1794,1064.5 H1809" stroke="#dcdcdc" stroke-width="1.6"/>
<rect x="1820" y="1056.5" width="7" height="7" fill="none" stroke="#dcdcdc" stroke-width="1"/><circle cx="1831" cy="1064" r="3.5" fill="none" stroke="#dcdcdc"/><path d="M1822,1072 L1825.5,1066 L1829,1072Z" fill="none" stroke="#dcdcdc"/>
<circle cx="1855.5" cy="1064.5" r="8.5" fill="#1a5fc0" stroke="#2a7ae8" stroke-width="1.5"/><path d="M1853,1068 L1858,1062" stroke="#8ab8f8" stroke-width="1.3"/>
<rect x="1874.5" y="1057.5" width="14" height="12" fill="none" stroke="#dcdcdc" stroke-width="1.2"/><path d="M1877,1067 L1881,1063 M1877,1067 H1880 M1877,1067 V1064 M1886,1060 L1882,1064 M1886,1060 H1883 M1886,1060 V1063" fill="none" stroke="#dcdcdc" stroke-width="1.1"/>
<path d="M1898,1058.5 H1912 M1898,1064 H1912 M1898,1069.5 H1912" stroke="#dcdcdc" stroke-width="1.6"/>
</svg>
<div class="t" style="left:1717px;top:1057px;color:#e8e8e8;font-size:13px;letter-spacing:-0.9px">1:1</div>
<!-- watermark -->
<div class="a" style="left:1750px;top:1041px;width:150px;height:19px;background:rgba(255,255,255,0.55)"></div>
<div class="t" style="left:1758px;top:1040px;font-size:15.5px;line-height:19px;font-weight:bold;color:#3b6a92;letter-spacing:0.4px;-webkit-text-stroke:1.5px #3b6a92;transform:scaleX(1.06);transform-origin:0 0">YAPLAKAL.COM</div>

</body></html>
